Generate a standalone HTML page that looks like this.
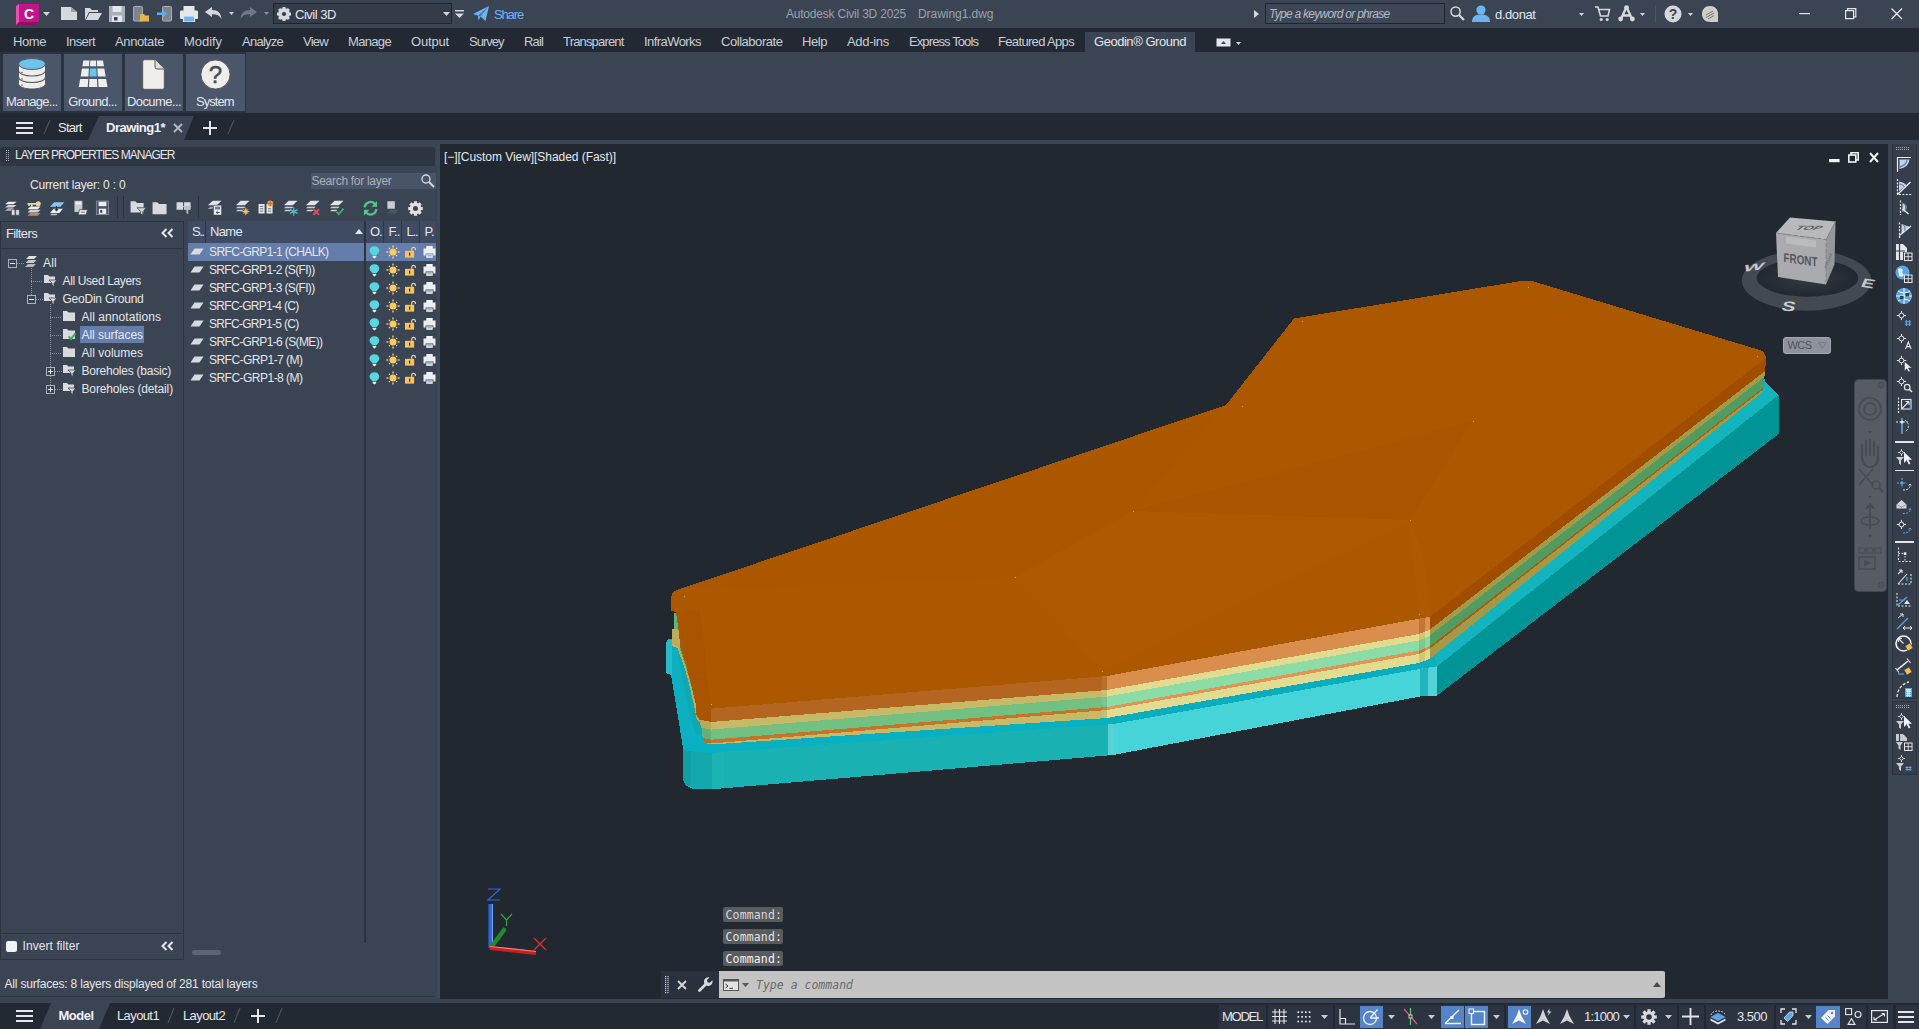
<!DOCTYPE html>
<html lang="en"><head><meta charset="utf-8"><title>Autodesk Civil 3D 2025 - Drawing1.dwg</title>
<style>
html,body{margin:0;padding:0;background:#3b4453;}
body{width:1919px;height:1029px;position:relative;overflow:hidden;font-family:"Liberation Sans",sans-serif;}
body>div,body>span,body>svg{position:absolute;display:block;}
span{white-space:pre;}
</style></head>
<body>
<div style="left:0px;top:0px;width:1919px;height:28px;background:#3b4453;"></div>
<div style="left:0px;top:28px;width:1919px;height:24px;background:#222933;"></div>
<div style="left:0px;top:52px;width:1919px;height:61px;background:#3b4453;"></div>
<div style="left:0px;top:113px;width:1919px;height:27px;background:#222933;"></div>
<div style="left:0px;top:140px;width:1919px;height:863px;background:#3b4453;"></div>
<div style="left:0px;top:1003px;width:1919px;height:26px;background:#222933;"></div>
<div style="left:440px;top:144px;width:1448px;height:855px;background:#212830;"></div>
<svg style="left:14px;top:3px;" width="27" height="23" viewBox="0 0 27 23"><path d="M2 3 L5 1 L25 1 L25 19 L22 22 L2 22 Z" fill="#8e0f63"/><path d="M5 1 H25 V19 H5 Z" fill="#c4148c"/><path d="M2 3 L5 1 V19 L2 22 Z" fill="#e255b0"/><text x="15" y="15.5" font-family="Liberation Sans,sans-serif" font-weight="700" font-size="14" fill="#fff" text-anchor="middle">C</text></svg>
<svg style="left:42.5px;top:12.0px;" width="7" height="4" viewBox="0 0 7 4"><path d="M0 0 H7 L3.5 4 Z" fill="#d4d6d9"/></svg>
<svg style="left:61px;top:7px;" width="17" height="14" viewBox="0 0 17 14"><path d="M0 0 H10 L16 5 V13 H0 Z" fill="#d6d8db"/><path d="M10 0 V5 H16 Z" fill="#9aa0a8"/></svg>
<svg style="left:85px;top:7px;" width="18" height="14" viewBox="0 0 18 14"><path d="M0 1 H5 L7 3 H13 V5 H4 L0 13 Z" fill="#d6d8db"/><path d="M4.5 6 H17 L13 13 H0.8 Z" fill="#d6d8db"/></svg>
<svg style="left:109px;top:6px;" width="17" height="16" viewBox="0 0 17 16"><path d="M0 0 H16 V16 H0 Z" fill="#a9afb8"/><rect x="3.5" y="0" width="9" height="6" fill="#e6e7ea"/><rect x="3" y="9.5" width="10" height="6.5" fill="#e6e7ea"/><rect x="5" y="11" width="3.5" height="3.5" fill="#3b4453"/></svg>
<svg style="left:133px;top:6px;" width="17" height="16" viewBox="0 0 17 16"><rect x="0.5" y="0.5" width="9" height="14.5" rx="1" fill="#7d848e" stroke="#a9afb8"/><path d="M7 8 H11 L12 9.5 H16 V15.5 H7 Z" fill="#e8b54a"/></svg>
<svg style="left:157px;top:6px;" width="16" height="16" viewBox="0 0 16 16"><rect x="5.5" y="0.5" width="9" height="14.5" rx="1" fill="#7d848e" stroke="#a9afb8"/><path d="M0 6.5 H6 V4 L10 7.7 L6 11.4 V9 H0 Z" fill="#58b0f0"/></svg>
<svg style="left:180px;top:6px;" width="18" height="16" viewBox="0 0 18 16"><rect x="3.5" y="0" width="11" height="5" fill="#e6e7ea"/><rect x="0" y="4.5" width="18" height="8.5" rx="1" fill="#e6e7ea"/><rect x="3.5" y="10" width="11" height="6" fill="#6db5f2" stroke="#e6e7ea" stroke-width="1.2"/></svg>
<svg style="left:205px;top:7px;" width="17" height="13" viewBox="0 0 17 13"><path d="M0 5 L7 0 V3 C13 3 16 6 16.5 12 C14.5 8.5 12 7.2 7 7.2 V10 Z" fill="#d6d8db"/></svg>
<svg style="left:228.5px;top:12.0px;" width="5" height="3" viewBox="0 0 5 3"><path d="M0 0 H5 L2.5 3 Z" fill="#d4d6d9"/></svg>
<svg style="left:240px;top:7px;" width="17" height="13" viewBox="0 0 17 13"><path d="M17 5 L10 0 V3 C4 3 1 6 0.5 12 C2.5 8.5 5 7.2 10 7.2 V10 Z" fill="#6f7886"/></svg>
<svg style="left:263.5px;top:12.0px;" width="5" height="3" viewBox="0 0 5 3"><path d="M0 0 H5 L2.5 3 Z" fill="#8d95a1"/></svg>
<div style="left:273px;top:3px;width:179px;height:21px;background:#343c4a;border:1px solid #1f252e;box-sizing:border-box;"></div>
<svg style="left:277px;top:7px;" width="14" height="14" viewBox="0 0 14 14"><g transform="translate(7 7)"><circle r="4" fill="none" stroke="#d6d8db" stroke-width="3.8"/><g fill="#d6d8db"><rect x="-1.5" y="-7" width="3" height="3.2" transform="rotate(0)"/><rect x="-1.5" y="-7" width="3" height="3.2" transform="rotate(45)"/><rect x="-1.5" y="-7" width="3" height="3.2" transform="rotate(90)"/><rect x="-1.5" y="-7" width="3" height="3.2" transform="rotate(135)"/><rect x="-1.5" y="-7" width="3" height="3.2" transform="rotate(180)"/><rect x="-1.5" y="-7" width="3" height="3.2" transform="rotate(225)"/><rect x="-1.5" y="-7" width="3" height="3.2" transform="rotate(270)"/><rect x="-1.5" y="-7" width="3" height="3.2" transform="rotate(315)"/></g></g></svg>
<span id="t1" style="left:295px;top:5.5px;font:normal 400 13px/17px 'Liberation Sans',sans-serif;color:#e4e6ea;letter-spacing:-0.475px;">Civil 3D</span>
<svg style="left:442.5px;top:12.0px;" width="7" height="4" viewBox="0 0 7 4"><path d="M0 0 H7 L3.5 4 Z" fill="#d4d6d9"/></svg>
<svg style="left:455px;top:10px;" width="10" height="9" viewBox="0 0 10 9"><rect x="0" y="0" width="9" height="1.5" fill="#d6d8db"/><path d="M0 3.5 H9 L4.5 8 Z" fill="#d6d8db"/></svg>
<svg style="left:473px;top:6px;" width="17" height="16" viewBox="0 0 17 16"><path d="M0 8 L16 0 L12.5 15 L7.5 10.5 L5.5 14.5 L5 9.5 Z" fill="#6db5f2"/><path d="M5 9.5 L16 0 L7.5 10.5 Z" fill="#3b4453" opacity=".55"/></svg>
<span id="t2" style="left:494px;top:5.5px;font:normal 400 13px/17px 'Liberation Sans',sans-serif;color:#6db5f2;letter-spacing:-1.141px;">Share</span>
<span id="t3" style="left:786px;top:6.0px;font:normal 400 12px/16px 'Liberation Sans',sans-serif;color:#9aa2ae;letter-spacing:-0.215px;">Autodesk Civil 3D 2025</span>
<span id="t4" style="left:918px;top:6.0px;font:normal 400 12px/16px 'Liberation Sans',sans-serif;color:#9aa2ae;letter-spacing:-0.046px;">Drawing1.dwg</span>
<svg style="left:1254px;top:10px;" width="5" height="8" viewBox="0 0 5 8"><path d="M0 0 L5 4 L0 8 Z" fill="#d6d8db"/></svg>
<div style="left:1265px;top:3px;width:180px;height:21px;background:#3f4757;border:1px solid #1f252e;box-sizing:border-box;"></div>
<span id="t5" style="left:1269px;top:6.0px;font:italic 400 12px/16px 'Liberation Sans',sans-serif;color:#b4bac4;letter-spacing:-0.723px;">Type a keyword or phrase</span>
<svg style="left:1450px;top:6px;" width="15" height="15" viewBox="0 0 15 15"><circle cx="5.6" cy="5.6" r="4.6" fill="none" stroke="#d6d8db" stroke-width="1.5"/><path d="M9 9 L14 14" stroke="#d6d8db" stroke-width="2.2"/></svg>
<svg style="left:1472px;top:5px;" width="18" height="17" viewBox="0 0 18 17"><circle cx="9" cy="5" r="4.6" fill="#6db5f2"/><path d="M0 17 C0 11 4 9.5 9 9.5 C14 9.5 18 11 18 17 Z" fill="#6db5f2"/></svg>
<span id="t6" style="left:1495px;top:5.5px;font:normal 400 13px/17px 'Liberation Sans',sans-serif;color:#e4e6ea;letter-spacing:-0.411px;">d.donat</span>
<svg style="left:1579.0px;top:13.0px;" width="5" height="3" viewBox="0 0 5 3"><path d="M0 0 H5 L2.5 3 Z" fill="#d4d6d9"/></svg>
<svg style="left:1595px;top:6px;" width="16" height="16" viewBox="0 0 16 16"><path d="M0 1 H3 L5.5 10 H13 L14.5 3.5 H4" fill="none" stroke="#d6d8db" stroke-width="1.6"/><circle cx="6.2" cy="13.5" r="1.5" fill="#d6d8db"/><circle cx="12.2" cy="13.5" r="1.5" fill="#d6d8db"/></svg>
<svg style="left:1618px;top:5px;" width="17" height="17" viewBox="0 0 17 17"><path d="M8.5 2 L2.5 15 M8.5 2 L14.5 15 M4.5 10.5 H12.5" stroke="#d6d8db" stroke-width="2.4" fill="none"/><circle cx="8.5" cy="2.6" r="2.4" fill="#d6d8db"/><circle cx="2.6" cy="14" r="2.4" fill="#d6d8db"/><circle cx="14.4" cy="14" r="2.4" fill="#d6d8db"/></svg>
<svg style="left:1640.0px;top:13.0px;" width="5" height="3" viewBox="0 0 5 3"><path d="M0 0 H5 L2.5 3 Z" fill="#d4d6d9"/></svg>
<div style="left:1655px;top:5px;width:1px;height:18px;background:#4a5465;"></div>
<svg style="left:1664px;top:5px;" width="18" height="18" viewBox="0 0 18 18"><circle cx="9" cy="9" r="8.5" fill="#d6d8db"/><text x="9" y="14" text-anchor="middle" font-family="Liberation Sans,sans-serif" font-weight="700" font-size="14" fill="#3b4453">?</text></svg>
<svg style="left:1687.5px;top:13.0px;" width="5" height="3" viewBox="0 0 5 3"><path d="M0 0 H5 L2.5 3 Z" fill="#d4d6d9"/></svg>
<svg style="left:1701px;top:5px;" width="18" height="18" viewBox="0 0 18 18"><path d="M9 1 C14 1 17 4.5 17 9 V17 H9 C4 17 1 13.5 1 9 C1 4.5 4 1 9 1 Z" fill="#d0cec8"/><path d="M5 10 L12 6 M5 12.5 L13 8 M7 14 L13 10.5" stroke="#77756f" stroke-width="1"/></svg>
<svg style="left:1799px;top:13px;" width="12" height="2" viewBox="0 0 12 2"><rect width="11" height="1.2" fill="#e4e6ea"/></svg>
<svg style="left:1845px;top:8px;" width="12" height="12" viewBox="0 0 12 12"><rect x="0.6" y="2.6" width="8" height="8" fill="none" stroke="#e4e6ea" stroke-width="1.2"/><path d="M2.6 2.6 V0.6 H10.8 V8.8 H8.6" fill="none" stroke="#e4e6ea" stroke-width="1.2"/></svg>
<svg style="left:1891px;top:8px;" width="12" height="12" viewBox="0 0 12 12"><path d="M0.5 0.5 L11 11 M11 0.5 L0.5 11" stroke="#e4e6ea" stroke-width="1.3"/></svg>
<div style="left:1085px;top:32px;width:110px;height:20px;background:#3b4453;"></div>
<span id="t7" style="left:13px;top:33.0px;font:normal 400 13px/17px 'Liberation Sans',sans-serif;color:#c9ced6;letter-spacing:-0.422px;">Home</span>
<span id="t8" style="left:66px;top:33.0px;font:normal 400 13px/17px 'Liberation Sans',sans-serif;color:#c9ced6;letter-spacing:-0.586px;">Insert</span>
<span id="t9" style="left:115px;top:33.0px;font:normal 400 13px/17px 'Liberation Sans',sans-serif;color:#c9ced6;letter-spacing:-0.381px;">Annotate</span>
<span id="t10" style="left:184px;top:33.0px;font:normal 400 13px/17px 'Liberation Sans',sans-serif;color:#c9ced6;letter-spacing:-0.049px;">Modify</span>
<span id="t11" style="left:242px;top:33.0px;font:normal 400 13px/17px 'Liberation Sans',sans-serif;color:#c9ced6;letter-spacing:-0.750px;">Analyze</span>
<span id="t12" style="left:303px;top:33.0px;font:normal 400 13px/17px 'Liberation Sans',sans-serif;color:#c9ced6;letter-spacing:-0.738px;">View</span>
<span id="t13" style="left:348px;top:33.0px;font:normal 400 13px/17px 'Liberation Sans',sans-serif;color:#c9ced6;letter-spacing:-0.664px;">Manage</span>
<span id="t14" style="left:411px;top:33.0px;font:normal 400 13px/17px 'Liberation Sans',sans-serif;color:#c9ced6;letter-spacing:-0.172px;">Output</span>
<span id="t15" style="left:469px;top:33.0px;font:normal 400 13px/17px 'Liberation Sans',sans-serif;color:#c9ced6;letter-spacing:-0.995px;">Survey</span>
<span id="t16" style="left:524px;top:33.0px;font:normal 400 13px/17px 'Liberation Sans',sans-serif;color:#c9ced6;letter-spacing:-0.852px;">Rail</span>
<span id="t17" style="left:563px;top:33.0px;font:normal 400 13px/17px 'Liberation Sans',sans-serif;color:#c9ced6;letter-spacing:-0.828px;">Transparent</span>
<span id="t18" style="left:644px;top:33.0px;font:normal 400 13px/17px 'Liberation Sans',sans-serif;color:#c9ced6;letter-spacing:-0.561px;">InfraWorks</span>
<span id="t19" style="left:721px;top:33.0px;font:normal 400 13px/17px 'Liberation Sans',sans-serif;color:#c9ced6;letter-spacing:-0.455px;">Collaborate</span>
<span id="t20" style="left:802px;top:33.0px;font:normal 400 13px/17px 'Liberation Sans',sans-serif;color:#c9ced6;letter-spacing:-0.438px;">Help</span>
<span id="t21" style="left:847px;top:33.0px;font:normal 400 13px/17px 'Liberation Sans',sans-serif;color:#c9ced6;letter-spacing:-0.297px;">Add-ins</span>
<span id="t22" style="left:909px;top:33.0px;font:normal 400 13px/17px 'Liberation Sans',sans-serif;color:#c9ced6;letter-spacing:-0.899px;">Express Tools</span>
<span id="t23" style="left:998px;top:33.0px;font:normal 400 13px/17px 'Liberation Sans',sans-serif;color:#c9ced6;letter-spacing:-0.659px;">Featured Apps</span>
<span id="t24" style="left:1094px;top:33.0px;font:normal 400 13px/17px 'Liberation Sans',sans-serif;color:#e4e6ea;letter-spacing:-0.463px;">Geodin&#174; Ground</span>
<svg style="left:1216px;top:38px;" width="18" height="9" viewBox="0 0 18 9"><rect x="0.5" y="0.5" width="14" height="8" fill="#e4e6ea"/><path d="M5 6 H10 L7.5 3 Z" fill="#3b4453"/></svg>
<svg style="left:1235.5px;top:41.5px;" width="5" height="3" viewBox="0 0 5 3"><path d="M0 0 H5 L2.5 3 Z" fill="#d4d6d9"/></svg>
<div style="left:0px;top:52px;width:246px;height:61px;background:#2b3340;"></div>
<div style="left:2.6px;top:54px;width:58.5px;height:57px;background:#4b566b;"></div>
<span id="t25" style="left:6px;top:93.0px;font:normal 400 13px/17px 'Liberation Sans',sans-serif;color:#e4e6ea;letter-spacing:-0.703px;">Manage...</span>
<div style="left:63.8px;top:54px;width:58.5px;height:57px;background:#4b566b;"></div>
<span id="t26" style="left:68.3px;top:93.0px;font:normal 400 13px/17px 'Liberation Sans',sans-serif;color:#e4e6ea;letter-spacing:-0.634px;">Ground...</span>
<div style="left:124.9px;top:54px;width:58.5px;height:57px;background:#4b566b;"></div>
<span id="t27" style="left:127px;top:93.0px;font:normal 400 13px/17px 'Liberation Sans',sans-serif;color:#e4e6ea;letter-spacing:-0.583px;">Docume...</span>
<div style="left:186px;top:54px;width:58.5px;height:57px;background:#4b566b;"></div>
<span id="t28" style="left:196px;top:93.0px;font:normal 400 13px/17px 'Liberation Sans',sans-serif;color:#e4e6ea;letter-spacing:-0.974px;">System</span>
<svg style="left:18px;top:58px;" width="28" height="32" viewBox="0 0 28 32"><path d="M0.5 6 V25.5 C0.5 28.8 6.5 31 14 31 C21.5 31 27.5 28.8 27.5 25.5 V6 Z" fill="#f0eeea" stroke="#55595f" stroke-width="1"/><path d="M0.5 12.5 C0.5 15.8 6.5 18 14 18 C21.5 18 27.5 15.8 27.5 12.5 M0.5 19 C0.5 22.3 6.5 24.5 14 24.5 C21.5 24.5 27.5 22.3 27.5 19" fill="none" stroke="#55595f" stroke-width="1.2"/><ellipse cx="14" cy="6" rx="13.5" ry="5.5" fill="#6cc4ec" stroke="#55595f" stroke-width="1"/><circle cx="4" cy="14.5" r=".8" fill="#55595f"/><circle cx="4" cy="21" r=".8" fill="#55595f"/><circle cx="4" cy="27" r=".8" fill="#55595f"/></svg>
<svg style="left:77px;top:60px;" width="32" height="28" viewBox="0 0 32 28"><polygon points="6.33,0.4 12.45,0.4 12.07,6.2 5.34,6.2" fill="#f0eeea"/><polygon points="13.31,0.4 18.99,0.4 19.28,6.2 13.02,6.2" fill="#f0eeea"/><polygon points="19.85,0.4 25.97,0.4 26.96,6.2 20.23,6.2" fill="#f0eeea"/><polygon points="4.97,8.4 11.93,8.4 11.42,16.4 3.61,16.4" fill="#f0eeea"/><polygon points="12.91,8.4 19.39,8.4 19.78,16.4 12.52,16.4" fill="#6cc4ec"/><polygon points="20.37,8.4 27.33,8.4 28.69,16.4 20.88,16.4" fill="#f0eeea"/><polygon points="3.16,19 11.25,19 10.74,27 1.80,27" fill="#f0eeea"/><polygon points="12.39,19 19.91,19 20.30,27 12.00,27" fill="#f0eeea"/><polygon points="21.05,19 29.14,19 30.50,27 21.56,27" fill="#f0eeea"/></svg>
<svg style="left:142px;top:58.5px;" width="24" height="31" viewBox="0 0 24 31"><path d="M2.5 0.7 H13 L22.3 10 V28.5 Q22.3 30.3 20.5 30.3 H2.5 Q0.7 30.3 0.7 28.5 V2.5 Q0.7 0.7 2.5 0.7 Z" fill="#f0eeea" stroke="#55595f" stroke-width="1"/><path d="M13 0.7 V8 Q13 10 15 10 H22.3" fill="#e2e0dc" stroke="#55595f" stroke-width="1"/></svg>
<svg style="left:199.5px;top:58.5px;" width="31" height="31" viewBox="0 0 31 31"><circle cx="15.5" cy="15.5" r="14.6" fill="#f0eeea" stroke="#55595f" stroke-width="1"/><text x="15.5" y="24" text-anchor="middle" font-family="Liberation Sans,sans-serif" font-weight="400" font-size="24" fill="#4a4d52" stroke="#4a4d52" stroke-width=".5">?</text></svg>
<svg style="left:16px;top:122px;" width="17" height="12" viewBox="0 0 17 12"><path d="M0 1 H17 M0 6 H17 M0 11 H17" stroke="#e4e6ea" stroke-width="1.8"/></svg>
<svg style="left:42px;top:120px;" width="10" height="14" viewBox="0 0 10 14"><path d="M8 0 L2 14" stroke="#4a5261" stroke-width="1.2"/></svg>
<span id="t29" style="left:58px;top:119.0px;font:normal 400 13px/17px 'Liberation Sans',sans-serif;color:#e4e6ea;letter-spacing:-0.794px;">Start</span>
<svg style="left:88px;top:116px;" width="108" height="24" viewBox="0 0 108 24"><path d="M0 24 L11 0 H106 L96 24 Z" fill="#3b4453"/></svg>
<span id="t30" style="left:106px;top:119.0px;font:normal 700 13px/17px 'Liberation Sans',sans-serif;color:#f0f1f3;letter-spacing:-0.509px;">Drawing1*</span>
<svg style="left:173px;top:123px;" width="10" height="10" viewBox="0 0 10 10"><path d="M1 1 L9 9 M9 1 L1 9" stroke="#b4bac4" stroke-width="1.8"/></svg>
<svg style="left:203px;top:121px;" width="14" height="14" viewBox="0 0 14 14"><path d="M7 0 V14 M0 7 H14" stroke="#e4e6ea" stroke-width="2"/></svg>
<svg style="left:226px;top:120px;" width="10" height="14" viewBox="0 0 10 14"><path d="M8 0 L2 14" stroke="#4a5261" stroke-width="1.2"/></svg>
<div style="left:0px;top:146px;width:437px;height:852px;background:#3b4453;border-radius:0 0 4px 4px;"></div>
<div style="left:436.5px;top:146px;width:3.5px;height:852px;background:#3f4858;"></div>
<div style="left:0px;top:996px;width:434px;height:1px;background:#2f3745;"></div>
<div style="left:0px;top:146.5px;width:435px;height:19.5px;background:#2e3543;border-radius:3px 3px 0 0;"></div>
<svg style="left:6px;top:150px;" width="4" height="12" viewBox="0 0 4 12"><rect x="0" y="0" width="1" height="1" fill="#aab0ba"/><rect x="0" y="2" width="1" height="1" fill="#aab0ba"/><rect x="0" y="4" width="1" height="1" fill="#aab0ba"/><rect x="0" y="6" width="1" height="1" fill="#aab0ba"/><rect x="0" y="8" width="1" height="1" fill="#aab0ba"/><rect x="0" y="10" width="1" height="1" fill="#aab0ba"/><rect x="2" y="0" width="1" height="1" fill="#aab0ba"/><rect x="2" y="2" width="1" height="1" fill="#aab0ba"/><rect x="2" y="4" width="1" height="1" fill="#aab0ba"/><rect x="2" y="6" width="1" height="1" fill="#aab0ba"/><rect x="2" y="8" width="1" height="1" fill="#aab0ba"/><rect x="2" y="10" width="1" height="1" fill="#aab0ba"/></svg>
<span id="t31" style="left:15px;top:147.0px;font:normal 400 12px/16px 'Liberation Sans',sans-serif;color:#e4e6ea;letter-spacing:-0.977px;">LAYER PROPERTIES MANAGER</span>
<span id="t32" style="left:30px;top:177.0px;font:normal 400 12px/16px 'Liberation Sans',sans-serif;color:#e4e6ea;letter-spacing:-0.194px;">Current layer: 0 : 0</span>
<div style="left:311px;top:173px;width:125px;height:16px;background:#4a5468;"></div>
<span id="t33" style="left:311.5px;top:173.0px;font:normal 400 12px/16px 'Liberation Sans',sans-serif;color:#aab1bd;letter-spacing:-0.294px;">Search for layer</span>
<svg style="left:421px;top:174px;" width="14" height="14" viewBox="0 0 14 14"><circle cx="5" cy="5" r="4" fill="none" stroke="#d6d8db" stroke-width="1.4"/><path d="M8 8 L13 13" stroke="#d6d8db" stroke-width="2"/></svg>
<svg style="left:3px;top:199px;" width="17" height="17" viewBox="-0.6 -1.4 18.2 18.2"><path d="M5 1.5 H14 L10.5 4.2 H1.5 Z" fill="#eceef0"/><path d="M5 5 H14 L10.5 7.7 H1.5 Z" fill="#d0d3d7"/><path d="M5 8.5 H11 L10 11.2 H1.5 Z" fill="#b4b8be"/><path d="M8.5 10 H12.2 V16 H8.5 Z M13 10 H16.8 V16 H13 Z" fill="#dcdfe3" stroke="#3b4453" stroke-width=".6"/></svg>
<svg style="left:26px;top:199px;" width="17" height="17" viewBox="-0.6 -1.4 18.2 18.2"><path d="M4 6.5 H15 L12 9.5 H1 Z" fill="#eceef0"/><path d="M4 10 H15 L12 13 H1 Z" fill="#cfd2d6"/><path d="M4 13.5 H15 L12 16.5 H1 Z" fill="#c48a52"/><circle cx="12.5" cy="3.8" r="2.7" fill="#e8d79c"/><path d="M1 3 H10.5 V4.8 H6.5 V6.6 H4.6 V4.8 H3.4 V6 H1.8 V4.8 H1 Z" fill="#e8d79c"/></svg>
<svg style="left:48px;top:199px;" width="17" height="17" viewBox="-0.6 -1.4 18.2 18.2"><path d="M6 2 H17 L12.5 7 H1.5 Z" fill="#8ac4ee"/><path d="M5.5 9 H15.5 L11.5 13.5 H1.5 Z" fill="#eceef0"/><path d="M8.5 6 V11 M6.8 9.4 L8.5 11.2 L10.2 9.4" stroke="#2a303a" stroke-width="1.1" fill="none"/><path d="M3 14.5 H9.5 L8.5 16 H2 Z" fill="#c8ccd1"/></svg>
<svg style="left:72px;top:199px;" width="17" height="17" viewBox="-0.6 -1.4 18.2 18.2"><rect x="2" y="0.5" width="8.5" height="12" fill="#c9ccd2"/><rect x="3.3" y="1.8" width="6" height="2.6" fill="#eceef0"/><path d="M7.5 10 H16 L14.5 15.5 H6 Z" fill="#eceef0" stroke="#3b4453" stroke-width=".8"/><path d="M9 12.7 H13.5" stroke="#5a6270" stroke-width="1"/></svg>
<svg style="left:94px;top:199px;" width="17" height="17" viewBox="-0.6 -1.4 18.2 18.2"><rect x="2" y="0.8" width="13" height="14.4" fill="#4c5566" stroke="#828a98" stroke-width="1"/><rect x="4.3" y="1.6" width="8.4" height="4.6" fill="#eceef0"/><rect x="4.6" y="9" width="7.8" height="5.6" fill="#eceef0"/><rect x="6" y="10.5" width="2.2" height="2.8" fill="#2f3644"/></svg>
<div style="left:117px;top:196px;width:1px;height:22px;background:#2c3340;"></div>
<div style="left:123px;top:196px;width:1px;height:22px;background:#2c3340;"></div>
<svg style="left:130px;top:199px;" width="17" height="17" viewBox="-0.6 -1.4 18.2 18.2"><path d="M0 1 H5 L7 3 H14 V13 H0 Z" fill="#d8dadd"/><path d="M7 8 H17 L13.2 12 V16 L10.8 14.5 V12 Z" fill="#d8dadd" stroke="#3b4453" stroke-width=".9"/></svg>
<svg style="left:152px;top:199px;" width="17" height="17" viewBox="-0.6 -1.4 18.2 18.2"><path d="M0 2 H5 L7 4 H15 V15 H0 Z" fill="#d8dadd"/></svg>
<svg style="left:176px;top:199px;" width="17" height="17" viewBox="-0.6 -1.4 18.2 18.2"><path d="M0 2 H7 V10 H0 Z M8 2 H15 V10 H8 Z" fill="#d8dadd"/><path d="M6 6 H16 L12.5 10 V15 L10.5 13.5 V10 Z" fill="#b9bdc4"/></svg>
<div style="left:198px;top:196px;width:1px;height:22px;background:#2c3340;"></div>
<svg style="left:206px;top:199px;" width="17" height="17" viewBox="-0.6 -1.4 18.2 18.2"><path d="M6.5 0.5 H16 L11 5.2 H1.5 Z" fill="#e2e3e6"/><path d="M4 6.8 H8 L6 9.2 H1.2 Z" fill="#9aa0aa"/><rect x="7.5" y="5.2" width="8.6" height="10.6" rx="1" fill="#f0f1f3" stroke="#3b4453" stroke-width=".6"/><rect x="9" y="6.8" width="5.6" height="3" fill="#4f7fc4"/><path d="M14 13 H10.4 M11.8 11.6 L10.4 13 L11.8 14.4" stroke="#333" stroke-width="1" fill="none"/></svg>
<svg style="left:234px;top:199px;" width="17" height="17" viewBox="-0.6 -1.4 18.2 18.2"><path d="M6.5 0.5 H16 L11 5.2 H1.5 Z" fill="#e2e3e6"/><path d="M3.2 7 H11.8 L10.2 8.6 H1.6 Z" fill="#d0d2d6"/><path d="M3.2 10.2 H9.5 L8 11.8 H1.6 Z" fill="#d0d2d6"/><path d="M12 7.5 L13.2 10.8 L16.5 12 L13.2 13.2 L12 16.5 L10.8 13.2 L7.5 12 L10.8 10.8 Z" fill="#f2c14a"/><path d="M9.3 9.3 L14.7 14.7 M14.7 9.3 L9.3 14.7" stroke="#f2c14a" stroke-width=".9"/></svg>
<svg style="left:258px;top:199px;" width="17" height="17" viewBox="-0.6 -1.4 18.2 18.2"><path d="M0 4 H6.5 V14 H0 Z M8.5 4 H15 V14 H8.5 Z" fill="#e6e7ea"/><path d="M1.5 6.5 H5 M1.5 9 H5 M1.5 11.5 H5 M10 9 H13.5 M10 11.5 H13.5" stroke="#5a6474" stroke-width=".9"/><circle cx="12.5" cy="3.5" r="3.2" fill="#f0a040"/><path d="M12.5 1 V6 M10 3.5 H15" stroke="#e8503a" stroke-width="1"/></svg>
<svg style="left:282px;top:199px;" width="17" height="17" viewBox="-0.6 -1.4 18.2 18.2"><path d="M6.5 0.5 H16 L11 5.2 H1.5 Z" fill="#e2e3e6"/><path d="M3.2 7 H11.8 L10.2 8.6 H1.6 Z" fill="#d0d2d6"/><path d="M3.2 10.2 H9.5 L8 11.8 H1.6 Z" fill="#d0d2d6"/><path d="M12 7.5 V16.5 M8 10 L16 14 M16 10 L8 14" stroke="#4fc4cc" stroke-width="1.3"/></svg>
<svg style="left:304px;top:199px;" width="17" height="17" viewBox="-0.6 -1.4 18.2 18.2"><path d="M6.5 0.5 H16 L11 5.2 H1.5 Z" fill="#e2e3e6"/><path d="M3.2 7 H11.8 L10.2 8.6 H1.6 Z" fill="#d0d2d6"/><path d="M3.2 10.2 H9.5 L8 11.8 H1.6 Z" fill="#d0d2d6"/><path d="M9.5 9.5 L15.5 15.5 M15.5 9.5 L9.5 15.5" stroke="#e8505a" stroke-width="2"/></svg>
<svg style="left:328px;top:199px;" width="17" height="17" viewBox="-0.6 -1.4 18.2 18.2"><path d="M6.5 0.5 H16 L11 5.2 H1.5 Z" fill="#e2e3e6"/><path d="M3.2 7 H11.8 L10.2 8.6 H1.6 Z" fill="#d0d2d6"/><path d="M3.2 10.2 H9.5 L8 11.8 H1.6 Z" fill="#d0d2d6"/><path d="M8.5 12 L11 14.8 L16 9" stroke="#3fae6a" stroke-width="2" fill="none"/></svg>
<svg style="left:362px;top:199px;" width="17" height="17" viewBox="-0.6 -1.4 18.2 18.2"><path d="M2.2 7.5 A6.3 6.3 0 0 1 13.2 4" fill="none" stroke="#52c888" stroke-width="2.4"/><path d="M15.5 0.8 V6.8 H9.5 Z" fill="#52c888"/><path d="M14.8 9.5 A6.3 6.3 0 0 1 3.8 13" fill="none" stroke="#52c888" stroke-width="2.4"/><path d="M1.5 16.2 V10.2 H7.5 Z" fill="#52c888"/></svg>
<svg style="left:384px;top:199px;" width="17" height="17" viewBox="-0.6 -1.4 18.2 18.2"><rect x="3" y="1" width="8" height="8" fill="#c9ccd1"/><path d="M6 10.5 H15 L12 14 H3 Z" fill="#4c5564"/></svg>
<svg style="left:407px;top:199px;" width="17" height="17" viewBox="-0.6 -1.4 18.2 18.2"><g transform="translate(8.5 8.8)"><circle r="4.4" fill="none" stroke="#e0e1e4" stroke-width="3.4"/><g fill="#e0e1e4"><rect x="-1.7" y="-7.8" width="3.4" height="3.2" transform="rotate(0)"/><rect x="-1.7" y="-7.8" width="3.4" height="3.2" transform="rotate(45)"/><rect x="-1.7" y="-7.8" width="3.4" height="3.2" transform="rotate(90)"/><rect x="-1.7" y="-7.8" width="3.4" height="3.2" transform="rotate(135)"/><rect x="-1.7" y="-7.8" width="3.4" height="3.2" transform="rotate(180)"/><rect x="-1.7" y="-7.8" width="3.4" height="3.2" transform="rotate(225)"/><rect x="-1.7" y="-7.8" width="3.4" height="3.2" transform="rotate(270)"/><rect x="-1.7" y="-7.8" width="3.4" height="3.2" transform="rotate(315)"/></g></g></svg>
<div style="left:0px;top:221px;width:184px;height:739px;background:#3b4453;border:1px solid #2c3340;box-sizing:border-box;"></div>
<div style="left:0px;top:248px;width:184px;height:1px;background:#2c3340;"></div>
<div style="left:0px;top:933px;width:184px;height:1px;background:#2c3340;"></div>
<span id="t34" style="left:6px;top:224.5px;font:normal 400 13px/17px 'Liberation Sans',sans-serif;color:#e4e6ea;letter-spacing:-0.627px;">Filters</span>
<svg style="left:161px;top:228px;" width="13" height="10" viewBox="0 0 13 10"><path d="M5.5 1 L1.5 5 L5.5 9 M11.5 1 L7.5 5 L11.5 9" fill="none" stroke="#e4e6ea" stroke-width="2"/></svg>
<svg style="left:161px;top:941px;" width="13" height="10" viewBox="0 0 13 10"><path d="M5.5 1 L1.5 5 L5.5 9 M11.5 1 L7.5 5 L11.5 9" fill="none" stroke="#e4e6ea" stroke-width="2"/></svg>
<div style="left:6px;top:940.5px;width:11px;height:11px;background:#f2f3f5;border-radius:2px;"></div>
<span id="t35" style="left:22.5px;top:938.0px;font:normal 400 12px/16px 'Liberation Sans',sans-serif;color:#e4e6ea;letter-spacing:0.076px;">Invert filter</span>
<svg style="left:31px;top:268px;" width="1" height="31" viewBox="0 0 1 31"><rect x="0" y="0" width="1" height="1" fill="#8b93a0"/><rect x="0" y="2" width="1" height="1" fill="#8b93a0"/><rect x="0" y="4" width="1" height="1" fill="#8b93a0"/><rect x="0" y="6" width="1" height="1" fill="#8b93a0"/><rect x="0" y="8" width="1" height="1" fill="#8b93a0"/><rect x="0" y="10" width="1" height="1" fill="#8b93a0"/><rect x="0" y="12" width="1" height="1" fill="#8b93a0"/><rect x="0" y="14" width="1" height="1" fill="#8b93a0"/><rect x="0" y="16" width="1" height="1" fill="#8b93a0"/><rect x="0" y="18" width="1" height="1" fill="#8b93a0"/><rect x="0" y="20" width="1" height="1" fill="#8b93a0"/><rect x="0" y="22" width="1" height="1" fill="#8b93a0"/><rect x="0" y="24" width="1" height="1" fill="#8b93a0"/><rect x="0" y="26" width="1" height="1" fill="#8b93a0"/><rect x="0" y="28" width="1" height="1" fill="#8b93a0"/><rect x="0" y="30" width="1" height="1" fill="#8b93a0"/></svg>
<svg style="left:50px;top:304px;" width="1" height="86" viewBox="0 0 1 86"><rect x="0" y="0" width="1" height="1" fill="#8b93a0"/><rect x="0" y="2" width="1" height="1" fill="#8b93a0"/><rect x="0" y="4" width="1" height="1" fill="#8b93a0"/><rect x="0" y="6" width="1" height="1" fill="#8b93a0"/><rect x="0" y="8" width="1" height="1" fill="#8b93a0"/><rect x="0" y="10" width="1" height="1" fill="#8b93a0"/><rect x="0" y="12" width="1" height="1" fill="#8b93a0"/><rect x="0" y="14" width="1" height="1" fill="#8b93a0"/><rect x="0" y="16" width="1" height="1" fill="#8b93a0"/><rect x="0" y="18" width="1" height="1" fill="#8b93a0"/><rect x="0" y="20" width="1" height="1" fill="#8b93a0"/><rect x="0" y="22" width="1" height="1" fill="#8b93a0"/><rect x="0" y="24" width="1" height="1" fill="#8b93a0"/><rect x="0" y="26" width="1" height="1" fill="#8b93a0"/><rect x="0" y="28" width="1" height="1" fill="#8b93a0"/><rect x="0" y="30" width="1" height="1" fill="#8b93a0"/><rect x="0" y="32" width="1" height="1" fill="#8b93a0"/><rect x="0" y="34" width="1" height="1" fill="#8b93a0"/><rect x="0" y="36" width="1" height="1" fill="#8b93a0"/><rect x="0" y="38" width="1" height="1" fill="#8b93a0"/><rect x="0" y="40" width="1" height="1" fill="#8b93a0"/><rect x="0" y="42" width="1" height="1" fill="#8b93a0"/><rect x="0" y="44" width="1" height="1" fill="#8b93a0"/><rect x="0" y="46" width="1" height="1" fill="#8b93a0"/><rect x="0" y="48" width="1" height="1" fill="#8b93a0"/><rect x="0" y="50" width="1" height="1" fill="#8b93a0"/><rect x="0" y="52" width="1" height="1" fill="#8b93a0"/><rect x="0" y="54" width="1" height="1" fill="#8b93a0"/><rect x="0" y="56" width="1" height="1" fill="#8b93a0"/><rect x="0" y="58" width="1" height="1" fill="#8b93a0"/><rect x="0" y="60" width="1" height="1" fill="#8b93a0"/><rect x="0" y="62" width="1" height="1" fill="#8b93a0"/><rect x="0" y="64" width="1" height="1" fill="#8b93a0"/><rect x="0" y="66" width="1" height="1" fill="#8b93a0"/><rect x="0" y="68" width="1" height="1" fill="#8b93a0"/><rect x="0" y="70" width="1" height="1" fill="#8b93a0"/><rect x="0" y="72" width="1" height="1" fill="#8b93a0"/><rect x="0" y="74" width="1" height="1" fill="#8b93a0"/><rect x="0" y="76" width="1" height="1" fill="#8b93a0"/><rect x="0" y="78" width="1" height="1" fill="#8b93a0"/><rect x="0" y="80" width="1" height="1" fill="#8b93a0"/><rect x="0" y="82" width="1" height="1" fill="#8b93a0"/><rect x="0" y="84" width="1" height="1" fill="#8b93a0"/></svg>
<svg style="left:17px;top:263px;" width="8" height="1" viewBox="0 0 8 1"><rect x="0" y="0" width="1" height="1" fill="#8b93a0"/><rect x="2" y="0" width="1" height="1" fill="#8b93a0"/><rect x="4" y="0" width="1" height="1" fill="#8b93a0"/><rect x="6" y="0" width="1" height="1" fill="#8b93a0"/></svg>
<svg style="left:31px;top:281px;" width="12" height="1" viewBox="0 0 12 1"><rect x="0" y="0" width="1" height="1" fill="#8b93a0"/><rect x="2" y="0" width="1" height="1" fill="#8b93a0"/><rect x="4" y="0" width="1" height="1" fill="#8b93a0"/><rect x="6" y="0" width="1" height="1" fill="#8b93a0"/><rect x="8" y="0" width="1" height="1" fill="#8b93a0"/><rect x="10" y="0" width="1" height="1" fill="#8b93a0"/></svg>
<svg style="left:36px;top:299px;" width="7" height="1" viewBox="0 0 7 1"><rect x="0" y="0" width="1" height="1" fill="#8b93a0"/><rect x="2" y="0" width="1" height="1" fill="#8b93a0"/><rect x="4" y="0" width="1" height="1" fill="#8b93a0"/><rect x="6" y="0" width="1" height="1" fill="#8b93a0"/></svg>
<svg style="left:50px;top:317px;" width="12" height="1" viewBox="0 0 12 1"><rect x="0" y="0" width="1" height="1" fill="#8b93a0"/><rect x="2" y="0" width="1" height="1" fill="#8b93a0"/><rect x="4" y="0" width="1" height="1" fill="#8b93a0"/><rect x="6" y="0" width="1" height="1" fill="#8b93a0"/><rect x="8" y="0" width="1" height="1" fill="#8b93a0"/><rect x="10" y="0" width="1" height="1" fill="#8b93a0"/></svg>
<svg style="left:50px;top:335px;" width="12" height="1" viewBox="0 0 12 1"><rect x="0" y="0" width="1" height="1" fill="#8b93a0"/><rect x="2" y="0" width="1" height="1" fill="#8b93a0"/><rect x="4" y="0" width="1" height="1" fill="#8b93a0"/><rect x="6" y="0" width="1" height="1" fill="#8b93a0"/><rect x="8" y="0" width="1" height="1" fill="#8b93a0"/><rect x="10" y="0" width="1" height="1" fill="#8b93a0"/></svg>
<svg style="left:50px;top:353px;" width="12" height="1" viewBox="0 0 12 1"><rect x="0" y="0" width="1" height="1" fill="#8b93a0"/><rect x="2" y="0" width="1" height="1" fill="#8b93a0"/><rect x="4" y="0" width="1" height="1" fill="#8b93a0"/><rect x="6" y="0" width="1" height="1" fill="#8b93a0"/><rect x="8" y="0" width="1" height="1" fill="#8b93a0"/><rect x="10" y="0" width="1" height="1" fill="#8b93a0"/></svg>
<svg style="left:55px;top:371px;" width="7" height="1" viewBox="0 0 7 1"><rect x="0" y="0" width="1" height="1" fill="#8b93a0"/><rect x="2" y="0" width="1" height="1" fill="#8b93a0"/><rect x="4" y="0" width="1" height="1" fill="#8b93a0"/><rect x="6" y="0" width="1" height="1" fill="#8b93a0"/></svg>
<svg style="left:55px;top:389px;" width="7" height="1" viewBox="0 0 7 1"><rect x="0" y="0" width="1" height="1" fill="#8b93a0"/><rect x="2" y="0" width="1" height="1" fill="#8b93a0"/><rect x="4" y="0" width="1" height="1" fill="#8b93a0"/><rect x="6" y="0" width="1" height="1" fill="#8b93a0"/></svg>
<svg style="left:8px;top:259px;" width="9" height="9" viewBox="0 0 9 9"><rect x="0.5" y="0.5" width="8" height="8" fill="#3b4453" stroke="#aab0ba"/><path d="M2 4.5 H7" stroke="#e4e6ea" stroke-width="1"/></svg>
<svg style="left:27px;top:295px;" width="9" height="9" viewBox="0 0 9 9"><rect x="0.5" y="0.5" width="8" height="8" fill="#3b4453" stroke="#aab0ba"/><path d="M2 4.5 H7" stroke="#e4e6ea" stroke-width="1"/></svg>
<svg style="left:46px;top:367px;" width="9" height="9" viewBox="0 0 9 9"><rect x="0.5" y="0.5" width="8" height="8" fill="#3b4453" stroke="#aab0ba"/><path d="M2 4.5 H7 M4.5 2 V7" stroke="#e4e6ea" stroke-width="1"/></svg>
<svg style="left:46px;top:385px;" width="9" height="9" viewBox="0 0 9 9"><rect x="0.5" y="0.5" width="8" height="8" fill="#3b4453" stroke="#aab0ba"/><path d="M2 4.5 H7 M4.5 2 V7" stroke="#e4e6ea" stroke-width="1"/></svg>
<svg style="left:25px;top:256px;" width="13" height="13" viewBox="0 0 13 13"><path d="M4 0 H12 L9 3 H1 Z" fill="#e0e1e4"/><path d="M3.5 4 H11.5 L8.5 7 H0.5 Z" fill="#c8cacd"/><path d="M3 8 H11 L8 11 H0 Z" fill="#b4b7bc"/></svg>
<svg style="left:43.5px;top:274px;" width="14" height="13" viewBox="0 0 14 13"><path d="M0 1 H4 L5.5 2.5 H11 V9 H0 Z" fill="#d8dadd"/><path d="M5 6 H13 L10 9.2 V12.5 L8 11.2 V9.2 Z" fill="#d8dadd" stroke="#3b4453" stroke-width=".8"/></svg>
<svg style="left:43.5px;top:292px;" width="14" height="13" viewBox="0 0 14 13"><path d="M0 1 H4 L5.5 2.5 H11 V9 H0 Z" fill="#d8dadd"/><path d="M5 6 H13 L10 9.2 V12.5 L8 11.2 V9.2 Z" fill="#d8dadd" stroke="#3b4453" stroke-width=".8"/></svg>
<svg style="left:62.5px;top:310px;" width="14" height="13" viewBox="0 0 14 13"><path d="M0 1 H4 L5.5 2.5 H12 V11 H0 Z" fill="#d8dadd"/></svg>
<svg style="left:62.5px;top:328px;" width="14" height="13" viewBox="0 0 14 13"><path d="M0 1 H4 L5.5 2.5 H12 V11 H0 Z" fill="#d8dadd"/><path d="M5.5 8.5 L8 11 L12.5 5.5" stroke="#3fae6a" stroke-width="2" fill="none"/></svg>
<svg style="left:62.5px;top:346px;" width="14" height="13" viewBox="0 0 14 13"><path d="M0 1 H4 L5.5 2.5 H12 V11 H0 Z" fill="#d8dadd"/></svg>
<svg style="left:62.5px;top:364px;" width="14" height="13" viewBox="0 0 14 13"><path d="M0 1 H4 L5.5 2.5 H11 V9 H0 Z" fill="#d8dadd"/><path d="M5 6 H13 L10 9.2 V12.5 L8 11.2 V9.2 Z" fill="#d8dadd" stroke="#3b4453" stroke-width=".8"/></svg>
<svg style="left:62.5px;top:382px;" width="14" height="13" viewBox="0 0 14 13"><path d="M0 1 H4 L5.5 2.5 H11 V9 H0 Z" fill="#d8dadd"/><path d="M5 6 H13 L10 9.2 V12.5 L8 11.2 V9.2 Z" fill="#d8dadd" stroke="#3b4453" stroke-width=".8"/></svg>
<div style="left:80px;top:326px;width:64px;height:17px;background:#647dab;"></div>
<span id="t36" style="left:43px;top:255.0px;font:normal 400 12px/16px 'Liberation Sans',sans-serif;color:#e4e6ea;letter-spacing:0.219px;">All</span>
<span id="t37" style="left:62.5px;top:273.0px;font:normal 400 12px/16px 'Liberation Sans',sans-serif;color:#e4e6ea;letter-spacing:-0.370px;">All Used Layers</span>
<span id="t38" style="left:62.5px;top:291.0px;font:normal 400 12px/16px 'Liberation Sans',sans-serif;color:#e4e6ea;letter-spacing:-0.234px;">GeoDin Ground</span>
<span id="t39" style="left:81.5px;top:309.0px;font:normal 400 12px/16px 'Liberation Sans',sans-serif;color:#e4e6ea;letter-spacing:0.051px;">All annotations</span>
<span id="t40" style="left:81.5px;top:327.0px;font:normal 400 12px/16px 'Liberation Sans',sans-serif;color:#e4e6ea;letter-spacing:-0.044px;">All surfaces</span>
<span id="t41" style="left:81.5px;top:345.0px;font:normal 400 12px/16px 'Liberation Sans',sans-serif;color:#e4e6ea;letter-spacing:0.013px;">All volumes</span>
<span id="t42" style="left:81.5px;top:363.0px;font:normal 400 12px/16px 'Liberation Sans',sans-serif;color:#e4e6ea;letter-spacing:-0.228px;">Boreholes (basic)</span>
<span id="t43" style="left:81.5px;top:381.0px;font:normal 400 12px/16px 'Liberation Sans',sans-serif;color:#e4e6ea;letter-spacing:-0.142px;">Boreholes (detail)</span>
<div style="left:188px;top:221px;width:176px;height:22px;background:#3f4b63;"></div>
<div style="left:366px;top:221px;width:70px;height:22px;background:#3f4b63;"></div>
<div style="left:364px;top:221px;width:2px;height:722px;background:#2c3340;"></div>
<div style="left:205px;top:221px;width:1px;height:22px;background:#2f3747;"></div>
<div style="left:383px;top:221px;width:1px;height:22px;background:#2f3747;"></div>
<div style="left:401px;top:221px;width:1px;height:22px;background:#2f3747;"></div>
<div style="left:419px;top:221px;width:1px;height:22px;background:#2f3747;"></div>
<span id="t44" style="left:192px;top:222.8px;font:normal 400 13px/17px 'Liberation Sans',sans-serif;color:#e4e6ea;letter-spacing:-1.469px;">S..</span>
<span id="t45" style="left:210px;top:222.8px;font:normal 400 13px/17px 'Liberation Sans',sans-serif;color:#e4e6ea;letter-spacing:-0.672px;">Name</span>
<span id="t46" style="left:370px;top:222.8px;font:normal 400 13px/17px 'Liberation Sans',sans-serif;color:#e4e6ea;letter-spacing:-1.117px;">O.</span>
<span id="t47" style="left:388.5px;top:222.8px;font:normal 400 13px/17px 'Liberation Sans',sans-serif;color:#e4e6ea;letter-spacing:-0.911px;">F..</span>
<span id="t48" style="left:406.5px;top:222.8px;font:normal 400 13px/17px 'Liberation Sans',sans-serif;color:#e4e6ea;letter-spacing:-1.156px;">L..</span>
<span id="t49" style="left:424.5px;top:222.8px;font:normal 400 13px/17px 'Liberation Sans',sans-serif;color:#e4e6ea;letter-spacing:-0.555px;">P.</span>
<svg style="left:355px;top:229px;" width="8" height="5" viewBox="0 0 8 5"><path d="M0 5 H8 L4 0 Z" fill="#e4e6ea"/></svg>
<div style="left:188px;top:243px;width:176px;height:18px;background:#647dab;"></div>
<div style="left:366px;top:243px;width:70px;height:18px;background:#647dab;"></div>
<span id="t50" style="left:209px;top:243.5px;font:normal 400 12px/16px 'Liberation Sans',sans-serif;color:#e4e6ea;letter-spacing:-0.624px;">SRFC-GRP1-1 (CHALK)</span>
<svg style="left:190px;top:248.0px;" width="14" height="7" viewBox="0 0 14 7"><path d="M4.5 0.5 H13.5 L9.5 6.5 H0.5 Z" fill="#d8dadd"/></svg>
<svg style="left:369px;top:245.5px;" width="11" height="13" viewBox="0 0 11 13"><path d="M5.4 0.3 C8.4 0.3 10.3 2.3 10.3 4.6 C10.3 6.6 8.8 7.6 7.6 8.9 H3.2 C2 7.6 0.5 6.6 0.5 4.6 C0.5 2.3 2.4 0.3 5.4 0.3 Z" fill="#5ad6e0"/><path d="M3.6 9.8 H7.2 V11 L5.4 12.4 L3.6 11 Z" fill="#f2f3f5"/></svg>
<svg style="left:385.5px;top:244.5px;" width="14" height="14" viewBox="0 0 14 14"><circle cx="7" cy="7" r="3.5" fill="#fccb5e"/><g stroke="#f8e7b8" stroke-width="1.2"><path d="M7 0.4 V2.4" transform="rotate(0 7 7)"/><path d="M7 0.4 V2.4" transform="rotate(90 7 7)"/><path d="M7 0.4 V2.4" transform="rotate(180 7 7)"/><path d="M7 0.4 V2.4" transform="rotate(270 7 7)"/><path d="M7 1.2 V2.5" transform="rotate(45 7 7)"/><path d="M7 1.2 V2.5" transform="rotate(135 7 7)"/><path d="M7 1.2 V2.5" transform="rotate(225 7 7)"/><path d="M7 1.2 V2.5" transform="rotate(315 7 7)"/></g></svg>
<svg style="left:404px;top:244.5px;" width="13" height="14" viewBox="0 0 13 14"><rect x="1" y="5.8" width="9.1" height="6.8" fill="#f8c458"/><rect x="5" y="7.6" width="1.2" height="3" fill="#2a2418"/><path d="M7.7 5.8 V3.9 A1.9 2.1 0 0 1 11.4 3.9 V5" fill="none" stroke="#f6d68c" stroke-width="1.2"/></svg>
<svg style="left:422.5px;top:245.0px;" width="13" height="13" viewBox="0 0 13 13"><rect x="3.3" y="1" width="6.4" height="3" fill="#f4f5f7"/><path d="M0.5 3.4 H12.5 V10.6 H10.4 V8.6 H2.6 V10.6 H0.5 Z" fill="#eceef2"/><rect x="3.3" y="9.4" width="6.4" height="3.4" fill="#f4f5f7"/><rect x="4.3" y="10.2" width="4.4" height="1.2" fill="#7aa6e0"/></svg>
<span id="t51" style="left:209px;top:261.5px;font:normal 400 12px/16px 'Liberation Sans',sans-serif;color:#e4e6ea;letter-spacing:-0.658px;">SRFC-GRP1-2 (S(FI))</span>
<svg style="left:190px;top:266.0px;" width="14" height="7" viewBox="0 0 14 7"><path d="M4.5 0.5 H13.5 L9.5 6.5 H0.5 Z" fill="#d8dadd"/></svg>
<svg style="left:369px;top:263.5px;" width="11" height="13" viewBox="0 0 11 13"><path d="M5.4 0.3 C8.4 0.3 10.3 2.3 10.3 4.6 C10.3 6.6 8.8 7.6 7.6 8.9 H3.2 C2 7.6 0.5 6.6 0.5 4.6 C0.5 2.3 2.4 0.3 5.4 0.3 Z" fill="#5ad6e0"/><path d="M3.6 9.8 H7.2 V11 L5.4 12.4 L3.6 11 Z" fill="#f2f3f5"/></svg>
<svg style="left:385.5px;top:262.5px;" width="14" height="14" viewBox="0 0 14 14"><circle cx="7" cy="7" r="3.5" fill="#fccb5e"/><g stroke="#f8e7b8" stroke-width="1.2"><path d="M7 0.4 V2.4" transform="rotate(0 7 7)"/><path d="M7 0.4 V2.4" transform="rotate(90 7 7)"/><path d="M7 0.4 V2.4" transform="rotate(180 7 7)"/><path d="M7 0.4 V2.4" transform="rotate(270 7 7)"/><path d="M7 1.2 V2.5" transform="rotate(45 7 7)"/><path d="M7 1.2 V2.5" transform="rotate(135 7 7)"/><path d="M7 1.2 V2.5" transform="rotate(225 7 7)"/><path d="M7 1.2 V2.5" transform="rotate(315 7 7)"/></g></svg>
<svg style="left:404px;top:262.5px;" width="13" height="14" viewBox="0 0 13 14"><rect x="1" y="5.8" width="9.1" height="6.8" fill="#f8c458"/><rect x="5" y="7.6" width="1.2" height="3" fill="#2a2418"/><path d="M7.7 5.8 V3.9 A1.9 2.1 0 0 1 11.4 3.9 V5" fill="none" stroke="#f6d68c" stroke-width="1.2"/></svg>
<svg style="left:422.5px;top:263.0px;" width="13" height="13" viewBox="0 0 13 13"><rect x="3.3" y="1" width="6.4" height="3" fill="#f4f5f7"/><path d="M0.5 3.4 H12.5 V10.6 H10.4 V8.6 H2.6 V10.6 H0.5 Z" fill="#eceef2"/><rect x="3.3" y="9.4" width="6.4" height="3.4" fill="#f4f5f7"/><rect x="4.3" y="10.2" width="4.4" height="1.2" fill="#7aa6e0"/></svg>
<span id="t52" style="left:209px;top:279.5px;font:normal 400 12px/16px 'Liberation Sans',sans-serif;color:#e4e6ea;letter-spacing:-0.658px;">SRFC-GRP1-3 (S(FI))</span>
<svg style="left:190px;top:284.0px;" width="14" height="7" viewBox="0 0 14 7"><path d="M4.5 0.5 H13.5 L9.5 6.5 H0.5 Z" fill="#d8dadd"/></svg>
<svg style="left:369px;top:281.5px;" width="11" height="13" viewBox="0 0 11 13"><path d="M5.4 0.3 C8.4 0.3 10.3 2.3 10.3 4.6 C10.3 6.6 8.8 7.6 7.6 8.9 H3.2 C2 7.6 0.5 6.6 0.5 4.6 C0.5 2.3 2.4 0.3 5.4 0.3 Z" fill="#5ad6e0"/><path d="M3.6 9.8 H7.2 V11 L5.4 12.4 L3.6 11 Z" fill="#f2f3f5"/></svg>
<svg style="left:385.5px;top:280.5px;" width="14" height="14" viewBox="0 0 14 14"><circle cx="7" cy="7" r="3.5" fill="#fccb5e"/><g stroke="#f8e7b8" stroke-width="1.2"><path d="M7 0.4 V2.4" transform="rotate(0 7 7)"/><path d="M7 0.4 V2.4" transform="rotate(90 7 7)"/><path d="M7 0.4 V2.4" transform="rotate(180 7 7)"/><path d="M7 0.4 V2.4" transform="rotate(270 7 7)"/><path d="M7 1.2 V2.5" transform="rotate(45 7 7)"/><path d="M7 1.2 V2.5" transform="rotate(135 7 7)"/><path d="M7 1.2 V2.5" transform="rotate(225 7 7)"/><path d="M7 1.2 V2.5" transform="rotate(315 7 7)"/></g></svg>
<svg style="left:404px;top:280.5px;" width="13" height="14" viewBox="0 0 13 14"><rect x="1" y="5.8" width="9.1" height="6.8" fill="#f8c458"/><rect x="5" y="7.6" width="1.2" height="3" fill="#2a2418"/><path d="M7.7 5.8 V3.9 A1.9 2.1 0 0 1 11.4 3.9 V5" fill="none" stroke="#f6d68c" stroke-width="1.2"/></svg>
<svg style="left:422.5px;top:281.0px;" width="13" height="13" viewBox="0 0 13 13"><rect x="3.3" y="1" width="6.4" height="3" fill="#f4f5f7"/><path d="M0.5 3.4 H12.5 V10.6 H10.4 V8.6 H2.6 V10.6 H0.5 Z" fill="#eceef2"/><rect x="3.3" y="9.4" width="6.4" height="3.4" fill="#f4f5f7"/><rect x="4.3" y="10.2" width="4.4" height="1.2" fill="#7aa6e0"/></svg>
<span id="t53" style="left:209px;top:297.5px;font:normal 400 12px/16px 'Liberation Sans',sans-serif;color:#e4e6ea;letter-spacing:-0.701px;">SRFC-GRP1-4 (C)</span>
<svg style="left:190px;top:302.0px;" width="14" height="7" viewBox="0 0 14 7"><path d="M4.5 0.5 H13.5 L9.5 6.5 H0.5 Z" fill="#d8dadd"/></svg>
<svg style="left:369px;top:299.5px;" width="11" height="13" viewBox="0 0 11 13"><path d="M5.4 0.3 C8.4 0.3 10.3 2.3 10.3 4.6 C10.3 6.6 8.8 7.6 7.6 8.9 H3.2 C2 7.6 0.5 6.6 0.5 4.6 C0.5 2.3 2.4 0.3 5.4 0.3 Z" fill="#5ad6e0"/><path d="M3.6 9.8 H7.2 V11 L5.4 12.4 L3.6 11 Z" fill="#f2f3f5"/></svg>
<svg style="left:385.5px;top:298.5px;" width="14" height="14" viewBox="0 0 14 14"><circle cx="7" cy="7" r="3.5" fill="#fccb5e"/><g stroke="#f8e7b8" stroke-width="1.2"><path d="M7 0.4 V2.4" transform="rotate(0 7 7)"/><path d="M7 0.4 V2.4" transform="rotate(90 7 7)"/><path d="M7 0.4 V2.4" transform="rotate(180 7 7)"/><path d="M7 0.4 V2.4" transform="rotate(270 7 7)"/><path d="M7 1.2 V2.5" transform="rotate(45 7 7)"/><path d="M7 1.2 V2.5" transform="rotate(135 7 7)"/><path d="M7 1.2 V2.5" transform="rotate(225 7 7)"/><path d="M7 1.2 V2.5" transform="rotate(315 7 7)"/></g></svg>
<svg style="left:404px;top:298.5px;" width="13" height="14" viewBox="0 0 13 14"><rect x="1" y="5.8" width="9.1" height="6.8" fill="#f8c458"/><rect x="5" y="7.6" width="1.2" height="3" fill="#2a2418"/><path d="M7.7 5.8 V3.9 A1.9 2.1 0 0 1 11.4 3.9 V5" fill="none" stroke="#f6d68c" stroke-width="1.2"/></svg>
<svg style="left:422.5px;top:299.0px;" width="13" height="13" viewBox="0 0 13 13"><rect x="3.3" y="1" width="6.4" height="3" fill="#f4f5f7"/><path d="M0.5 3.4 H12.5 V10.6 H10.4 V8.6 H2.6 V10.6 H0.5 Z" fill="#eceef2"/><rect x="3.3" y="9.4" width="6.4" height="3.4" fill="#f4f5f7"/><rect x="4.3" y="10.2" width="4.4" height="1.2" fill="#7aa6e0"/></svg>
<span id="t54" style="left:209px;top:315.5px;font:normal 400 12px/16px 'Liberation Sans',sans-serif;color:#e4e6ea;letter-spacing:-0.701px;">SRFC-GRP1-5 (C)</span>
<svg style="left:190px;top:320.0px;" width="14" height="7" viewBox="0 0 14 7"><path d="M4.5 0.5 H13.5 L9.5 6.5 H0.5 Z" fill="#d8dadd"/></svg>
<svg style="left:369px;top:317.5px;" width="11" height="13" viewBox="0 0 11 13"><path d="M5.4 0.3 C8.4 0.3 10.3 2.3 10.3 4.6 C10.3 6.6 8.8 7.6 7.6 8.9 H3.2 C2 7.6 0.5 6.6 0.5 4.6 C0.5 2.3 2.4 0.3 5.4 0.3 Z" fill="#5ad6e0"/><path d="M3.6 9.8 H7.2 V11 L5.4 12.4 L3.6 11 Z" fill="#f2f3f5"/></svg>
<svg style="left:385.5px;top:316.5px;" width="14" height="14" viewBox="0 0 14 14"><circle cx="7" cy="7" r="3.5" fill="#fccb5e"/><g stroke="#f8e7b8" stroke-width="1.2"><path d="M7 0.4 V2.4" transform="rotate(0 7 7)"/><path d="M7 0.4 V2.4" transform="rotate(90 7 7)"/><path d="M7 0.4 V2.4" transform="rotate(180 7 7)"/><path d="M7 0.4 V2.4" transform="rotate(270 7 7)"/><path d="M7 1.2 V2.5" transform="rotate(45 7 7)"/><path d="M7 1.2 V2.5" transform="rotate(135 7 7)"/><path d="M7 1.2 V2.5" transform="rotate(225 7 7)"/><path d="M7 1.2 V2.5" transform="rotate(315 7 7)"/></g></svg>
<svg style="left:404px;top:316.5px;" width="13" height="14" viewBox="0 0 13 14"><rect x="1" y="5.8" width="9.1" height="6.8" fill="#f8c458"/><rect x="5" y="7.6" width="1.2" height="3" fill="#2a2418"/><path d="M7.7 5.8 V3.9 A1.9 2.1 0 0 1 11.4 3.9 V5" fill="none" stroke="#f6d68c" stroke-width="1.2"/></svg>
<svg style="left:422.5px;top:317.0px;" width="13" height="13" viewBox="0 0 13 13"><rect x="3.3" y="1" width="6.4" height="3" fill="#f4f5f7"/><path d="M0.5 3.4 H12.5 V10.6 H10.4 V8.6 H2.6 V10.6 H0.5 Z" fill="#eceef2"/><rect x="3.3" y="9.4" width="6.4" height="3.4" fill="#f4f5f7"/><rect x="4.3" y="10.2" width="4.4" height="1.2" fill="#7aa6e0"/></svg>
<span id="t55" style="left:209px;top:333.5px;font:normal 400 12px/16px 'Liberation Sans',sans-serif;color:#e4e6ea;letter-spacing:-0.623px;">SRFC-GRP1-6 (S(ME))</span>
<svg style="left:190px;top:338.0px;" width="14" height="7" viewBox="0 0 14 7"><path d="M4.5 0.5 H13.5 L9.5 6.5 H0.5 Z" fill="#d8dadd"/></svg>
<svg style="left:369px;top:335.5px;" width="11" height="13" viewBox="0 0 11 13"><path d="M5.4 0.3 C8.4 0.3 10.3 2.3 10.3 4.6 C10.3 6.6 8.8 7.6 7.6 8.9 H3.2 C2 7.6 0.5 6.6 0.5 4.6 C0.5 2.3 2.4 0.3 5.4 0.3 Z" fill="#5ad6e0"/><path d="M3.6 9.8 H7.2 V11 L5.4 12.4 L3.6 11 Z" fill="#f2f3f5"/></svg>
<svg style="left:385.5px;top:334.5px;" width="14" height="14" viewBox="0 0 14 14"><circle cx="7" cy="7" r="3.5" fill="#fccb5e"/><g stroke="#f8e7b8" stroke-width="1.2"><path d="M7 0.4 V2.4" transform="rotate(0 7 7)"/><path d="M7 0.4 V2.4" transform="rotate(90 7 7)"/><path d="M7 0.4 V2.4" transform="rotate(180 7 7)"/><path d="M7 0.4 V2.4" transform="rotate(270 7 7)"/><path d="M7 1.2 V2.5" transform="rotate(45 7 7)"/><path d="M7 1.2 V2.5" transform="rotate(135 7 7)"/><path d="M7 1.2 V2.5" transform="rotate(225 7 7)"/><path d="M7 1.2 V2.5" transform="rotate(315 7 7)"/></g></svg>
<svg style="left:404px;top:334.5px;" width="13" height="14" viewBox="0 0 13 14"><rect x="1" y="5.8" width="9.1" height="6.8" fill="#f8c458"/><rect x="5" y="7.6" width="1.2" height="3" fill="#2a2418"/><path d="M7.7 5.8 V3.9 A1.9 2.1 0 0 1 11.4 3.9 V5" fill="none" stroke="#f6d68c" stroke-width="1.2"/></svg>
<svg style="left:422.5px;top:335.0px;" width="13" height="13" viewBox="0 0 13 13"><rect x="3.3" y="1" width="6.4" height="3" fill="#f4f5f7"/><path d="M0.5 3.4 H12.5 V10.6 H10.4 V8.6 H2.6 V10.6 H0.5 Z" fill="#eceef2"/><rect x="3.3" y="9.4" width="6.4" height="3.4" fill="#f4f5f7"/><rect x="4.3" y="10.2" width="4.4" height="1.2" fill="#7aa6e0"/></svg>
<span id="t56" style="left:209px;top:351.5px;font:normal 400 12px/16px 'Liberation Sans',sans-serif;color:#e4e6ea;letter-spacing:-0.523px;">SRFC-GRP1-7 (M)</span>
<svg style="left:190px;top:356.0px;" width="14" height="7" viewBox="0 0 14 7"><path d="M4.5 0.5 H13.5 L9.5 6.5 H0.5 Z" fill="#d8dadd"/></svg>
<svg style="left:369px;top:353.5px;" width="11" height="13" viewBox="0 0 11 13"><path d="M5.4 0.3 C8.4 0.3 10.3 2.3 10.3 4.6 C10.3 6.6 8.8 7.6 7.6 8.9 H3.2 C2 7.6 0.5 6.6 0.5 4.6 C0.5 2.3 2.4 0.3 5.4 0.3 Z" fill="#5ad6e0"/><path d="M3.6 9.8 H7.2 V11 L5.4 12.4 L3.6 11 Z" fill="#f2f3f5"/></svg>
<svg style="left:385.5px;top:352.5px;" width="14" height="14" viewBox="0 0 14 14"><circle cx="7" cy="7" r="3.5" fill="#fccb5e"/><g stroke="#f8e7b8" stroke-width="1.2"><path d="M7 0.4 V2.4" transform="rotate(0 7 7)"/><path d="M7 0.4 V2.4" transform="rotate(90 7 7)"/><path d="M7 0.4 V2.4" transform="rotate(180 7 7)"/><path d="M7 0.4 V2.4" transform="rotate(270 7 7)"/><path d="M7 1.2 V2.5" transform="rotate(45 7 7)"/><path d="M7 1.2 V2.5" transform="rotate(135 7 7)"/><path d="M7 1.2 V2.5" transform="rotate(225 7 7)"/><path d="M7 1.2 V2.5" transform="rotate(315 7 7)"/></g></svg>
<svg style="left:404px;top:352.5px;" width="13" height="14" viewBox="0 0 13 14"><rect x="1" y="5.8" width="9.1" height="6.8" fill="#f8c458"/><rect x="5" y="7.6" width="1.2" height="3" fill="#2a2418"/><path d="M7.7 5.8 V3.9 A1.9 2.1 0 0 1 11.4 3.9 V5" fill="none" stroke="#f6d68c" stroke-width="1.2"/></svg>
<svg style="left:422.5px;top:353.0px;" width="13" height="13" viewBox="0 0 13 13"><rect x="3.3" y="1" width="6.4" height="3" fill="#f4f5f7"/><path d="M0.5 3.4 H12.5 V10.6 H10.4 V8.6 H2.6 V10.6 H0.5 Z" fill="#eceef2"/><rect x="3.3" y="9.4" width="6.4" height="3.4" fill="#f4f5f7"/><rect x="4.3" y="10.2" width="4.4" height="1.2" fill="#7aa6e0"/></svg>
<span id="t57" style="left:209px;top:369.5px;font:normal 400 12px/16px 'Liberation Sans',sans-serif;color:#e4e6ea;letter-spacing:-0.523px;">SRFC-GRP1-8 (M)</span>
<svg style="left:190px;top:374.0px;" width="14" height="7" viewBox="0 0 14 7"><path d="M4.5 0.5 H13.5 L9.5 6.5 H0.5 Z" fill="#d8dadd"/></svg>
<svg style="left:369px;top:371.5px;" width="11" height="13" viewBox="0 0 11 13"><path d="M5.4 0.3 C8.4 0.3 10.3 2.3 10.3 4.6 C10.3 6.6 8.8 7.6 7.6 8.9 H3.2 C2 7.6 0.5 6.6 0.5 4.6 C0.5 2.3 2.4 0.3 5.4 0.3 Z" fill="#5ad6e0"/><path d="M3.6 9.8 H7.2 V11 L5.4 12.4 L3.6 11 Z" fill="#f2f3f5"/></svg>
<svg style="left:385.5px;top:370.5px;" width="14" height="14" viewBox="0 0 14 14"><circle cx="7" cy="7" r="3.5" fill="#fccb5e"/><g stroke="#f8e7b8" stroke-width="1.2"><path d="M7 0.4 V2.4" transform="rotate(0 7 7)"/><path d="M7 0.4 V2.4" transform="rotate(90 7 7)"/><path d="M7 0.4 V2.4" transform="rotate(180 7 7)"/><path d="M7 0.4 V2.4" transform="rotate(270 7 7)"/><path d="M7 1.2 V2.5" transform="rotate(45 7 7)"/><path d="M7 1.2 V2.5" transform="rotate(135 7 7)"/><path d="M7 1.2 V2.5" transform="rotate(225 7 7)"/><path d="M7 1.2 V2.5" transform="rotate(315 7 7)"/></g></svg>
<svg style="left:404px;top:370.5px;" width="13" height="14" viewBox="0 0 13 14"><rect x="1" y="5.8" width="9.1" height="6.8" fill="#f8c458"/><rect x="5" y="7.6" width="1.2" height="3" fill="#2a2418"/><path d="M7.7 5.8 V3.9 A1.9 2.1 0 0 1 11.4 3.9 V5" fill="none" stroke="#f6d68c" stroke-width="1.2"/></svg>
<svg style="left:422.5px;top:371.0px;" width="13" height="13" viewBox="0 0 13 13"><rect x="3.3" y="1" width="6.4" height="3" fill="#f4f5f7"/><path d="M0.5 3.4 H12.5 V10.6 H10.4 V8.6 H2.6 V10.6 H0.5 Z" fill="#eceef2"/><rect x="3.3" y="9.4" width="6.4" height="3.4" fill="#f4f5f7"/><rect x="4.3" y="10.2" width="4.4" height="1.2" fill="#7aa6e0"/></svg>
<div style="left:192px;top:950px;width:29px;height:5px;background:#5a6476;border-radius:2.5px;"></div>
<span id="t58" style="left:4.5px;top:976.0px;font:normal 400 12px/16px 'Liberation Sans',sans-serif;color:#e4e6ea;letter-spacing:-0.189px;">All surfaces: 8 layers displayed of 281 total layers</span>
<svg style="left:16px;top:1010px;" width="17" height="12" viewBox="0 0 17 12"><path d="M0 1 H17 M0 6 H17 M0 11 H17" stroke="#e4e6ea" stroke-width="1.8"/></svg>
<svg style="left:40px;top:1003px;" width="72" height="26" viewBox="0 0 72 26"><path d="M0 26 L11 0 H70 L59 26 Z" fill="#3b4453"/></svg>
<span id="t59" style="left:58.5px;top:1007.0px;font:normal 700 13px/17px 'Liberation Sans',sans-serif;color:#f2f3f5;letter-spacing:-0.512px;">Model</span>
<span id="t60" style="left:117px;top:1007.0px;font:normal 400 13px/17px 'Liberation Sans',sans-serif;color:#e4e6ea;letter-spacing:-0.609px;">Layout1</span>
<svg style="left:166px;top:1008px;" width="10" height="15" viewBox="0 0 10 15"><path d="M8 0 L2 15" stroke="#4a5261" stroke-width="1.2"/></svg>
<span id="t61" style="left:183px;top:1007.0px;font:normal 400 13px/17px 'Liberation Sans',sans-serif;color:#e4e6ea;letter-spacing:-0.609px;">Layout2</span>
<svg style="left:232px;top:1008px;" width="10" height="15" viewBox="0 0 10 15"><path d="M8 0 L2 15" stroke="#4a5261" stroke-width="1.2"/></svg>
<svg style="left:251px;top:1008.5px;" width="14" height="14" viewBox="0 0 14 14"><path d="M7 0 V14 M0 7 H14" stroke="#e4e6ea" stroke-width="2"/></svg>
<svg style="left:274px;top:1008px;" width="10" height="15" viewBox="0 0 10 15"><path d="M8 0 L2 15" stroke="#4a5261" stroke-width="1.2"/></svg>
<span id="t62" style="left:444px;top:149.0px;font:normal 400 12px/16px 'Liberation Sans',sans-serif;color:#e8eaee;letter-spacing:-0.049px;">[&#8722;][Custom View][Shaded (Fast)]</span>
<svg style="left:1828.5px;top:158.8px;" width="11" height="4" viewBox="0 0 11 4"><rect width="10.6" height="3.2" fill="#f2f3f5"/></svg>
<svg style="left:1848px;top:152px;" width="11" height="11" viewBox="0 0 11 11"><rect x="0.8" y="3" width="7" height="7" fill="none" stroke="#f2f3f5" stroke-width="1.6"/><path d="M3 3 V0.8 H10.2 V8 H8" fill="none" stroke="#f2f3f5" stroke-width="1.6"/></svg>
<svg style="left:1869px;top:152px;" width="10" height="11" viewBox="0 0 10 11"><path d="M1 1 L9 10 M9 1 L1 10" stroke="#f2f3f5" stroke-width="2"/></svg>
<div style="left:723px;top:907.0px;width:60px;height:15px;background:#595b5e;border-radius:2px;"></div>
<span id="t63" style="left:725.5px;top:907.8px;font:normal 400 11.5px/15.5px 'DejaVu Sans Mono','Liberation Mono',monospace;color:#d8d8d8;letter-spacing:0.139px;">Command:</span>
<div style="left:723px;top:929.0px;width:60px;height:15px;background:#595b5e;border-radius:2px;"></div>
<span id="t64" style="left:725.5px;top:929.8px;font:normal 400 11.5px/15.5px 'DejaVu Sans Mono','Liberation Mono',monospace;color:#e2e2e2;letter-spacing:0.139px;">Command:</span>
<div style="left:723px;top:951.0px;width:60px;height:15px;background:#595b5e;border-radius:2px;"></div>
<span id="t65" style="left:725.5px;top:951.8px;font:normal 400 11.5px/15.5px 'DejaVu Sans Mono','Liberation Mono',monospace;color:#f4f4f4;letter-spacing:0.139px;">Command:</span>
<div style="left:661px;top:971px;width:58px;height:27px;background:#2a313e;"></div>
<div style="left:719px;top:971px;width:946px;height:27px;background:#c4c4c4;border-radius:0 2px 2px 0;"></div>
<svg style="left:665px;top:976px;" width="5" height="18" viewBox="0 0 5 18"><rect x="0" y="0" width="1.2" height="1.2" fill="#c8ccd2"/><rect x="0" y="2" width="1.2" height="1.2" fill="#c8ccd2"/><rect x="0" y="4" width="1.2" height="1.2" fill="#c8ccd2"/><rect x="0" y="6" width="1.2" height="1.2" fill="#c8ccd2"/><rect x="0" y="8" width="1.2" height="1.2" fill="#c8ccd2"/><rect x="0" y="10" width="1.2" height="1.2" fill="#c8ccd2"/><rect x="0" y="12" width="1.2" height="1.2" fill="#c8ccd2"/><rect x="0" y="14" width="1.2" height="1.2" fill="#c8ccd2"/><rect x="0" y="16" width="1.2" height="1.2" fill="#c8ccd2"/><rect x="2.4" y="0" width="1.2" height="1.2" fill="#c8ccd2"/><rect x="2.4" y="2" width="1.2" height="1.2" fill="#c8ccd2"/><rect x="2.4" y="4" width="1.2" height="1.2" fill="#c8ccd2"/><rect x="2.4" y="6" width="1.2" height="1.2" fill="#c8ccd2"/><rect x="2.4" y="8" width="1.2" height="1.2" fill="#c8ccd2"/><rect x="2.4" y="10" width="1.2" height="1.2" fill="#c8ccd2"/><rect x="2.4" y="12" width="1.2" height="1.2" fill="#c8ccd2"/><rect x="2.4" y="14" width="1.2" height="1.2" fill="#c8ccd2"/><rect x="2.4" y="16" width="1.2" height="1.2" fill="#c8ccd2"/></svg>
<svg style="left:677px;top:980px;" width="10" height="10" viewBox="0 0 10 10"><path d="M1 1 L9 9 M9 1 L1 9" stroke="#d6d8db" stroke-width="1.8"/></svg>
<svg style="left:698px;top:977px;" width="15" height="15" viewBox="0 0 15 15"><path d="M1.5 13.5 L8 7" stroke="#d6d8db" stroke-width="2.8" stroke-linecap="round"/><path d="M14.3 3.2 L11.8 5.7 L9.5 5.2 L9 3 L11.5 0.5 A4.3 4.3 0 1 0 14.3 3.2 Z" fill="#d6d8db"/></svg>
<svg style="left:723px;top:979px;" width="16" height="12" viewBox="0 0 16 12"><rect x="0.5" y="0.5" width="15" height="11" fill="#e4e4e4" stroke="#555" stroke-width="1"/><rect x="0.5" y="0.5" width="15" height="2" fill="#555"/><path d="M2.5 5 L5 7 L2.5 9 M6.5 9.3 H10" stroke="#333" stroke-width="1" fill="none"/></svg>
<svg style="left:741.5px;top:983.0px;" width="7" height="4" viewBox="0 0 7 4"><path d="M0 0 H7 L3.5 4 Z" fill="#555"/></svg>
<span id="t66" style="left:756px;top:978.2px;font:italic 400 11.5px/15.5px 'DejaVu Sans Mono','Liberation Mono',monospace;color:#6a6a6a;letter-spacing:0.004px;">Type a command</span>
<svg style="left:1653px;top:982px;" width="8" height="5" viewBox="0 0 8 5"><path d="M0 5 H8 L4 0 Z" fill="#4a4a4a"/></svg>
<svg style="left:480px;top:884px;" width="72" height="76" viewBox="0 0 72 76"><path d="M10.5 20 V64" stroke="#2f68d8" stroke-width="4"/><path d="M12.5 20 V63" stroke="#7ea6f0" stroke-width="1"/>
<path d="M12 62 L24 46" stroke="#1f8a2a" stroke-width="4.5" stroke-linecap="round"/>
<path d="M10 64 L56 69" stroke="#c82020" stroke-width="4" /><path d="M10 62.5 L56 67.5" stroke="#ff7a7a" stroke-width="1.2"/>
<path d="M8 5 H20 L8 16 H20" fill="none" stroke="#2f68d8" stroke-width="1.2"/>
<path d="M21 30 L26.5 36 L32 30 M26.5 36 V42" fill="none" stroke="#24a836" stroke-width="1.2"/>
<path d="M54 54 L66 66 M66 54 L54 66" stroke="#e03030" stroke-width="1.2"/></svg>
<svg style="left:1735px;top:205px;" width="145" height="120" viewBox="0 0 145 120"><defs><radialGradient id="vg" cx="50%" cy="50%" r="50%"><stop offset="0" stop-color="#343a42"/><stop offset="1" stop-color="#212830"/></radialGradient></defs>
<ellipse cx="72" cy="73" rx="50" ry="19" fill="url(#vg)"/>
<path fill-rule="evenodd" fill="#434951" d="M6.9 75.5 a64.7 30.2 0 1 0 129.4 0 a64.7 30.2 0 1 0 -129.4 0 Z M21.8 72.9 a50.7 18.8 0 1 0 101.4 0 a50.7 18.8 0 1 0 -101.4 0 Z"/>
<path d="M41 28 L55 12.5 L100.5 16.5 L91 34.5 Z" fill="#b7b9bd"/>
<path d="M91 34.5 L100.5 16.5 L99.5 59.5 L91 79.5 Z" fill="#94979b"/>
<path d="M41 28 L91 34.5 L91 79.5 L43 72 Z" fill="#a9abaf"/>
<path d="M51 31.5 L81 35.5 V42.5 L51 38.5 Z" fill="#bcbec4" opacity=".85"/>
<path d="M41 28 L91 34.5 L91 79.5" fill="none" stroke="#7e8186" stroke-width=".8" stroke-dasharray="4 2"/>
<path d="M91 34.5 L100.5 16.5" fill="none" stroke="#86898e" stroke-width=".8"/>
<text x="65.5" y="59.3" transform="skewY(7.5) translate(0 -8.6)" font-family="Liberation Sans,sans-serif" font-weight="700" font-size="13" fill="#54575d" text-anchor="middle" textLength="34" lengthAdjust="spacingAndGlyphs">FRONT</text>
<text transform="translate(72.5 24.5) skewX(-38) scale(1.25 .62)" font-family="Liberation Sans,sans-serif" font-weight="700" font-style="italic" font-size="10" fill="#5d6066" text-anchor="middle">TOP</text>
<text transform="translate(94.5 56) rotate(-66) scale(.8 .5)" font-family="Liberation Sans,sans-serif" font-weight="700" font-size="6.5" fill="#6d7076" text-anchor="middle">RIGHT</text>
<text transform="translate(17.5 65.5) rotate(-8) skewX(-32) scale(1.45 .62)" font-family="Liberation Sans,sans-serif" font-weight="700" font-size="15" fill="#c3c7cc" text-anchor="middle">W</text>
<text transform="translate(52.5 106) rotate(4) skewX(-12) scale(1.35 .92)" font-family="Liberation Sans,sans-serif" font-weight="700" font-size="15" fill="#c9cdd2" text-anchor="middle">S</text>
<text transform="translate(131.5 82.5) rotate(9) skewX(-14) scale(1.3 .85)" font-family="Liberation Sans,sans-serif" font-weight="700" font-size="15" fill="#c3c7cc" text-anchor="middle">E</text></svg>
<div style="left:1783px;top:337px;width:48px;height:17px;background:#8e929c;border-radius:3px;border:1px solid #a4a8b2;box-sizing:border-box;"></div>
<span id="t67" style="left:1787.5px;top:338.0px;font:normal 400 11px/15px 'Liberation Sans',sans-serif;color:#4e525a;letter-spacing:-0.557px;">WCS</span>
<svg style="left:1818px;top:342px;" width="9" height="7" viewBox="0 0 9 7"><path d="M0.5 0.5 H8.5 L4.5 6 Z" fill="none" stroke="#767a84" stroke-width="1"/></svg>
<svg style="left:1854px;top:379px;" width="33" height="213" viewBox="0 0 33 213"><rect x="0.5" y="0.5" width="32" height="212" rx="4" fill="#565b64" stroke="#40454d"/>
<circle cx="27" cy="6" r="3" fill="#50555d" stroke="#484d55"/><circle cx="27" cy="206" r="3" fill="#50555d" stroke="#484d55"/>
<circle cx="16" cy="30" r="11" fill="none" stroke="#464b54" stroke-width="1.6"/><circle cx="16" cy="30" r="6" fill="none" stroke="#464b54" stroke-width="1.4"/>
<path d="M8 78 V66 M12 76 V62 M16 76 V61 M20 76 V63 M24 78 V68 M8 78 Q9 88 16 88 Q24 88 24 78" fill="none" stroke="#464b54" stroke-width="2.2" stroke-linecap="round"/>
<path d="M5 90 L19 106 M19 90 L5 106" stroke="#464b54" stroke-width="1.6"/><circle cx="22" cy="106" r="4" fill="none" stroke="#464b54" stroke-width="1.5"/><path d="M25 109 L29 113" stroke="#464b54" stroke-width="2"/>
<path d="M16 126 V150 M12 130 L16 125 L20 130" fill="none" stroke="#464b54" stroke-width="2"/><ellipse cx="16" cy="142" rx="9" ry="4" fill="none" stroke="#464b54" stroke-width="1.4"/>
<rect x="5" y="169" width="6" height="5" fill="none" stroke="#464b54"/><rect x="13" y="169" width="6" height="5" fill="none" stroke="#464b54"/><rect x="21" y="169" width="6" height="5" fill="none" stroke="#464b54"/>
<rect x="5" y="178" width="16" height="12" fill="none" stroke="#464b54" stroke-width="1.3"/><path d="M10 180.5 L17 184 L10 187.5 Z" fill="#464b54"/>
<path d="M14 52 H18 L16 54.5 Z M14 117 H18 L16 119.5 Z M14 156 H18 L16 158.5 Z" fill="#464b54"/></svg>
<div style="left:1218.5px;top:1005px;width:47.0px;height:24px;background:#2c3441;"></div>
<div style="left:1268px;top:1005px;width:64.5px;height:24px;background:#2c3441;"></div>
<div style="left:1335px;top:1005px;width:168.5px;height:24px;background:#2c3441;"></div>
<div style="left:1506px;top:1005px;width:127.5px;height:24px;background:#2c3441;"></div>
<div style="left:1636px;top:1005px;width:40.5px;height:24px;background:#2c3441;"></div>
<div style="left:1678.5px;top:1005px;width:25.0px;height:24px;background:#2c3441;"></div>
<div style="left:1706px;top:1005px;width:67.5px;height:24px;background:#2c3441;"></div>
<div style="left:1776px;top:1005px;width:89.5px;height:24px;background:#2c3441;"></div>
<div style="left:1868px;top:1005px;width:25px;height:24px;background:#2c3441;"></div>
<div style="left:1895.5px;top:1005px;width:23.5px;height:24px;background:#2c3441;"></div>
<div style="left:1360px;top:1006px;width:22.5px;height:22px;background:#5585c8;"></div>
<div style="left:1441px;top:1006px;width:22.5px;height:22px;background:#5585c8;"></div>
<div style="left:1465px;top:1006px;width:22.5px;height:22px;background:#5585c8;"></div>
<div style="left:1508px;top:1006px;width:22.5px;height:22px;background:#5585c8;"></div>
<div style="left:1816px;top:1006px;width:24px;height:22px;background:#5585c8;"></div>
<span id="t68" style="left:1222px;top:1008.0px;font:normal 400 13px/17px 'Liberation Sans',sans-serif;color:#e4e6ea;letter-spacing:-1.247px;">MODEL</span>
<svg style="left:1271px;top:1008px;" width="17" height="17" viewBox="0 0 17 17"><path d="M4 1 V16 M8.5 1 V16 M13 1 V16 M1 4 H16 M1 8.5 H16 M1 13 H16" stroke="#e4e6ea" stroke-width="1.1"/></svg>
<svg style="left:1297px;top:1011px;" width="15" height="12" viewBox="0 0 15 12"><rect x="0.4" y="0.3" width="1.7" height="1.7" fill="#e4e6ea"/><rect x="0.4" y="5" width="1.7" height="1.7" fill="#e4e6ea"/><rect x="0.4" y="9.7" width="1.7" height="1.7" fill="#e4e6ea"/><rect x="4.2" y="0.3" width="1.7" height="1.7" fill="#e4e6ea"/><rect x="4.2" y="5" width="1.7" height="1.7" fill="#e4e6ea"/><rect x="4.2" y="9.7" width="1.7" height="1.7" fill="#e4e6ea"/><rect x="8" y="0.3" width="1.7" height="1.7" fill="#e4e6ea"/><rect x="8" y="5" width="1.7" height="1.7" fill="#e4e6ea"/><rect x="8" y="9.7" width="1.7" height="1.7" fill="#e4e6ea"/><rect x="11.8" y="0.3" width="1.7" height="1.7" fill="#e4e6ea"/><rect x="11.8" y="5" width="1.7" height="1.7" fill="#e4e6ea"/><rect x="11.8" y="9.7" width="1.7" height="1.7" fill="#e4e6ea"/></svg>
<svg style="left:1320.5px;top:1015.0px;" width="7" height="4" viewBox="0 0 7 4"><path d="M0 0 H7 L3.5 4 Z" fill="#c9ced6"/></svg>
<svg style="left:1339px;top:1008px;" width="17" height="17" viewBox="0 0 17 17"><path d="M1 1 V16 H16 M1 10.5 H6.5 V16" fill="none" stroke="#e4e6ea" stroke-width="1.2"/></svg>
<svg style="left:1362px;top:1008px;" width="18" height="18" viewBox="0 0 18 18"><circle cx="8" cy="10" r="6.5" fill="none" stroke="#f2f3f5" stroke-width="1.3"/><path d="M8 10 H17 M8 10 L15.5 1.5" stroke="#f2f3f5" stroke-width="1.3"/></svg>
<svg style="left:1387.5px;top:1015.0px;" width="7" height="4" viewBox="0 0 7 4"><path d="M0 0 H7 L3.5 4 Z" fill="#c9ced6"/></svg>
<svg style="left:1403px;top:1008px;" width="16" height="17" viewBox="0 0 16 17"><path d="M1 1 L14 16" stroke="#e85a6a" stroke-width="1.2"/><path d="M7.5 0 V17" stroke="#5fd07a" stroke-width="1.2"/><rect x="6" y="7" width="3" height="3" fill="#2c3441" stroke="#e4e6ea" stroke-width=".8"/></svg>
<svg style="left:1427.5px;top:1015.0px;" width="7" height="4" viewBox="0 0 7 4"><path d="M0 0 H7 L3.5 4 Z" fill="#c9ced6"/></svg>
<svg style="left:1444px;top:1008px;" width="18" height="18" viewBox="0 0 18 18"><path d="M1 15.5 H17 M1 15.5 L15 2" stroke="#f2f3f5" stroke-width="1.4"/><rect x="6.5" y="8" width="3" height="3" fill="#f2f3f5"/></svg>
<svg style="left:1468px;top:1008px;" width="18" height="18" viewBox="0 0 18 18"><rect x="3.5" y="3.5" width="13" height="13" fill="none" stroke="#f2f3f5" stroke-width="1.4"/><rect x="1" y="1" width="4.5" height="4.5" fill="#5585c8" stroke="#f2f3f5" stroke-width="1.1"/></svg>
<svg style="left:1492.5px;top:1015.0px;" width="7" height="4" viewBox="0 0 7 4"><path d="M0 0 H7 L3.5 4 Z" fill="#c9ced6"/></svg>
<svg style="left:1511px;top:1008px;" width="18" height="18" viewBox="0 0 18 18"><path d="M8 1 L10.5 8 L15 16 L8 12.5 L1 16 L5.5 8 Z" fill="#f2f3f5"/><circle cx="14.5" cy="4" r="2.3" fill="none" stroke="#f2f3f5" stroke-width="1.1"/></svg>
<svg style="left:1535px;top:1008px;" width="18" height="18" viewBox="0 0 18 18"><path d="M8 1 L10.5 8 L15 16 L8 12.5 L1 16 L5.5 8 Z" fill="#d0d3d8"/><path d="M14.5 0.5 L12 4.5 H14 L12.5 8 L16.5 3.5 H14.3 Z" fill="#d0d3d8"/></svg>
<svg style="left:1559px;top:1008px;" width="16" height="18" viewBox="0 0 16 18"><path d="M8 1 L10.5 8 L15 16 L8 12.5 L1 16 L5.5 8 Z" fill="#d0d3d8"/></svg>
<span id="t69" style="left:1584px;top:1008.0px;font:normal 400 13px/17px 'Liberation Sans',sans-serif;color:#e4e6ea;letter-spacing:-0.794px;">1:1000</span>
<svg style="left:1622.5px;top:1015.0px;" width="7" height="4" viewBox="0 0 7 4"><path d="M0 0 H7 L3.5 4 Z" fill="#c9ced6"/></svg>
<svg style="left:1641px;top:1009px;" width="16" height="16" viewBox="0 0 16 16"><g transform="translate(8 8)"><circle r="4.3" fill="none" stroke="#d8dadd" stroke-width="3"/><g fill="#d8dadd"><rect x="-1.6" y="-7.8" width="3.2" height="3.2" transform="rotate(0)"/><rect x="-1.6" y="-7.8" width="3.2" height="3.2" transform="rotate(45)"/><rect x="-1.6" y="-7.8" width="3.2" height="3.2" transform="rotate(90)"/><rect x="-1.6" y="-7.8" width="3.2" height="3.2" transform="rotate(135)"/><rect x="-1.6" y="-7.8" width="3.2" height="3.2" transform="rotate(180)"/><rect x="-1.6" y="-7.8" width="3.2" height="3.2" transform="rotate(225)"/><rect x="-1.6" y="-7.8" width="3.2" height="3.2" transform="rotate(270)"/><rect x="-1.6" y="-7.8" width="3.2" height="3.2" transform="rotate(315)"/></g></g></svg>
<svg style="left:1665.0px;top:1015.0px;" width="7" height="4" viewBox="0 0 7 4"><path d="M0 0 H7 L3.5 4 Z" fill="#c9ced6"/></svg>
<svg style="left:1682px;top:1008px;" width="17" height="17" viewBox="0 0 17 17"><path d="M8.5 0 V17 M0 8.5 H17" stroke="#e4e6ea" stroke-width="1.8"/></svg>
<svg style="left:1710px;top:1008px;" width="16" height="17" viewBox="0 0 16 17"><path d="M1 7 A7 4 0 0 1 15 7" fill="none" stroke="#e4e6ea" stroke-width="1" stroke-dasharray="1.6 1.4"/><path d="M8 5 L15.5 9 L8 13 L0.5 9 Z" fill="#58a8e8"/><path d="M0.5 10.5 L8 14.5 L15.5 10.5 V12.5 L8 16.5 L0.5 12.5 Z" fill="#e4e6ea"/></svg>
<span id="t70" style="left:1737px;top:1008.0px;font:normal 400 13px/17px 'Liberation Sans',sans-serif;color:#e4e6ea;letter-spacing:-0.509px;">3.500</span>
<svg style="left:1780px;top:1008px;" width="17" height="17" viewBox="0 0 17 17"><path d="M1 5 V1 H5 M12 1 H16 V5 M16 12 V16 H12 M5 16 H1 V12" fill="none" stroke="#e4e6ea" stroke-width="1.3"/><path d="M4 10 L9.5 4 H13 V7.5 L7.5 13.5 Z" fill="#58a8e8" stroke="#e4e6ea" stroke-width=".8"/></svg>
<svg style="left:1804.5px;top:1015.0px;" width="7" height="4" viewBox="0 0 7 4"><path d="M0 0 H7 L3.5 4 Z" fill="#c9ced6"/></svg>
<svg style="left:1820px;top:1008px;" width="16" height="17" viewBox="0 0 16 17"><path d="M1 10 L8.5 2 H15 V8.5 L7.5 16 Z" fill="#f2f3f5"/><circle cx="12" cy="5" r="1.3" fill="#5585c8"/><path d="M5.5 9.5 L8.5 12.5 M7.5 7.5 L10.5 10.5" stroke="#5585c8" stroke-width="1"/></svg>
<svg style="left:1845px;top:1008px;" width="17" height="17" viewBox="0 0 17 17"><rect x="0.6" y="0.6" width="6" height="6" fill="none" stroke="#e4e6ea" stroke-width="1.1"/><circle cx="13" cy="6.5" r="3" fill="none" stroke="#e4e6ea" stroke-width="1.1"/><path d="M3 16.4 H10 L6.5 10.5 Z" fill="none" stroke="#e4e6ea" stroke-width="1.1"/></svg>
<svg style="left:1871px;top:1010px;" width="17" height="13" viewBox="0 0 17 13"><rect x="0.6" y="0.6" width="15.8" height="11.8" fill="none" stroke="#e4e6ea" stroke-width="1.2"/><path d="M3 10 L13.5 3.5 M3 10 V7 M3 10 H6 M13.5 3.5 V6.5 M13.5 3.5 H10.5" stroke="#e4e6ea" stroke-width="1.1" fill="none"/></svg>
<svg style="left:1898px;top:1010.5px;" width="16" height="12" viewBox="0 0 16 12"><path d="M0 1 H16 M0 6 H16 M0 11 H16" stroke="#e4e6ea" stroke-width="1.8"/></svg>
<div style="left:1892px;top:144px;width:25px;height:555px;background:#363e4c;border:1px solid #2c3340;border-top:none;box-sizing:border-box;"></div>
<div style="left:1892px;top:701px;width:25px;height:74px;background:#363e4c;border:1px solid #2c3340;box-sizing:border-box;"></div>
<svg style="left:1896px;top:147px;" width="14" height="3" viewBox="0 0 14 3"><rect x="0" y="0" width="1" height="1" fill="#aab0ba"/><rect x="0" y="2" width="1" height="1" fill="#aab0ba"/><rect x="2" y="0" width="1" height="1" fill="#aab0ba"/><rect x="2" y="2" width="1" height="1" fill="#aab0ba"/><rect x="4" y="0" width="1" height="1" fill="#aab0ba"/><rect x="4" y="2" width="1" height="1" fill="#aab0ba"/><rect x="6" y="0" width="1" height="1" fill="#aab0ba"/><rect x="6" y="2" width="1" height="1" fill="#aab0ba"/><rect x="8" y="0" width="1" height="1" fill="#aab0ba"/><rect x="8" y="2" width="1" height="1" fill="#aab0ba"/><rect x="10" y="0" width="1" height="1" fill="#aab0ba"/><rect x="10" y="2" width="1" height="1" fill="#aab0ba"/><rect x="12" y="0" width="1" height="1" fill="#aab0ba"/><rect x="12" y="2" width="1" height="1" fill="#aab0ba"/></svg>
<svg style="left:1896px;top:705px;" width="14" height="3" viewBox="0 0 14 3"><rect x="0" y="0" width="1" height="1" fill="#aab0ba"/><rect x="0" y="2" width="1" height="1" fill="#aab0ba"/><rect x="2" y="0" width="1" height="1" fill="#aab0ba"/><rect x="2" y="2" width="1" height="1" fill="#aab0ba"/><rect x="4" y="0" width="1" height="1" fill="#aab0ba"/><rect x="4" y="2" width="1" height="1" fill="#aab0ba"/><rect x="6" y="0" width="1" height="1" fill="#aab0ba"/><rect x="6" y="2" width="1" height="1" fill="#aab0ba"/><rect x="8" y="0" width="1" height="1" fill="#aab0ba"/><rect x="8" y="2" width="1" height="1" fill="#aab0ba"/><rect x="10" y="0" width="1" height="1" fill="#aab0ba"/><rect x="10" y="2" width="1" height="1" fill="#aab0ba"/><rect x="12" y="0" width="1" height="1" fill="#aab0ba"/><rect x="12" y="2" width="1" height="1" fill="#aab0ba"/></svg>
<div style="left:1895px;top:441px;width:19px;height:1.6px;background:#e4e6ea;"></div>
<div style="left:1895px;top:469.5px;width:19px;height:1.6px;background:#e4e6ea;"></div>
<div style="left:1895px;top:541px;width:19px;height:1.6px;background:#e4e6ea;"></div>
<svg style="left:1895px;top:155px;" width="18" height="18" viewBox="0 0 18 18"><path d="M2.5 17 V2.5 H16" fill="none" stroke="#eef0f3" stroke-width="1.2"/><path d="M4.5 4.5 H14.5 Q13.5 12.5 4.5 14 Z" fill="#c6d2e2"/><path d="M12 4.6 Q11.4 10.2 4.6 12" fill="none" stroke="#5b86bc" stroke-width="1.3"/></svg>
<svg style="left:1895px;top:178px;" width="18" height="18" viewBox="0 0 18 18"><path d="M2.5 1 V16.5 H17" fill="none" stroke="#eef0f3" stroke-width="1.2" stroke-dasharray="2 1.4"/><path d="M2.5 16.5 L15.5 4" stroke="#eef0f3" stroke-width="1.3"/><path d="M4 13 V3.5 Q10 4.5 11.5 7.5 Z" fill="#c6d2e2"/><path d="M4.2 5.8 Q8 6.4 9.6 9" fill="none" stroke="#5b86bc" stroke-width="1.2"/></svg>
<svg style="left:1895px;top:199px;" width="18" height="18" viewBox="0 0 18 18"><path d="M5.5 1.5 V16" stroke="#eef0f3" stroke-width="1.2" stroke-dasharray="2 1.4"/><path d="M7.5 3.5 Q14 9 7.5 13 Z" fill="#c6d2e2"/><path d="M9.5 4.6 Q13.4 9 9 12.2" fill="none" stroke="#5b86bc" stroke-width="1.2"/><path d="M7.5 10 L13.5 15" stroke="#eef0f3" stroke-width="1.2"/></svg>
<svg style="left:1895px;top:221px;" width="18" height="18" viewBox="0 0 18 18"><path d="M4.5 1.5 V17" stroke="#eef0f3" stroke-width="1.2" stroke-dasharray="2 1.4"/><path d="M6.5 3 L15 6 L6.5 13 Z" fill="#c6d2e2"/><path d="M4.5 14.5 L16 5" stroke="#eef0f3" stroke-width="1.2"/><path d="M8.4 4 Q11 6.5 9.6 10" fill="none" stroke="#5b86bc" stroke-width="1.1"/></svg>
<svg style="left:1895px;top:243px;" width="18" height="18" viewBox="0 0 18 18"><path d="M1 1 H8 L12 5 V9 H8 V17 H1 Z" fill="#e4e6ea"/><path d="M4.5 1 V17 M1 8 H10" stroke="#343c4a" stroke-width="1.2"/><rect x="9.5" y="10" width="7.5" height="7.5" fill="#343c4a" stroke="#e4e6ea" stroke-width="1"/><path d="M13.2 10 V17.5 M9.5 13.7 H17" stroke="#e4e6ea" stroke-width=".9"/></svg>
<svg style="left:1895px;top:265px;" width="18" height="18" viewBox="0 0 18 18"><circle cx="7.5" cy="7.5" r="7" fill="#58a8e8"/><path d="M3 4 Q6 2 8 5 Q6 8 9 10 Q7 13 4 11 Z" fill="#dff0ff"/><rect x="9.5" y="10" width="7.5" height="7.5" fill="#343c4a" stroke="#e4e6ea" stroke-width="1"/><path d="M13.2 10 V17.5 M9.5 13.7 H17" stroke="#e4e6ea" stroke-width=".9"/></svg>
<svg style="left:1895px;top:287px;" width="18" height="18" viewBox="0 0 18 18"><circle cx="9" cy="9" r="8" fill="#58a8e8"/><path d="M1 9 H17 M9 1 V17 M3 4 Q9 8 15 4 M3 14 Q9 10 15 14" fill="none" stroke="#e8f4ff" stroke-width="1"/><rect x="5" y="9" width="3.5" height="3.5" fill="#343c4a"/><rect x="10.5" y="6" width="3.5" height="3.5" fill="#343c4a"/></svg>
<svg style="left:1895px;top:309px;" width="18" height="18" viewBox="0 0 18 18"><path d="M6.5 6.5m-4.6 0h9.2m-4.6 -4.6v9.2" stroke="#e4e6ea" stroke-width="1"/><circle cx="6.5" cy="6.5" r="2.4" fill="#363e4c" stroke="#e4e6ea" stroke-width="1"/><rect x="5.0" y="5.0" width="0" height="0"/><path d="M11.5 11 V17 M14.5 11 V17 M9.8 12.8 H16.2 M9.8 15.2 H16.2" stroke="#58a8e8" stroke-width="1.1"/></svg>
<svg style="left:1895px;top:332px;" width="18" height="18" viewBox="0 0 18 18"><path d="M6.5 6.5m-4.6 0h9.2m-4.6 -4.6v9.2" stroke="#e4e6ea" stroke-width="1"/><circle cx="6.5" cy="6.5" r="2.4" fill="#363e4c" stroke="#e4e6ea" stroke-width="1"/><rect x="5.0" y="5.0" width="0" height="0"/><path d="M10.5 17 L13.3 10 L16.1 17 M11.5 14.6 H15.1" fill="none" stroke="#e4e6ea" stroke-width="1.1"/></svg>
<svg style="left:1895px;top:354px;" width="18" height="18" viewBox="0 0 18 18"><path d="M6.5 6.5m-4.6 0h9.2m-4.6 -4.6v9.2" stroke="#e4e6ea" stroke-width="1"/><circle cx="6.5" cy="6.5" r="2.4" fill="#363e4c" stroke="#e4e6ea" stroke-width="1"/><rect x="5.0" y="5.0" width="0" height="0"/><path d="M9.5 7.5 V17 L11.8 14.8 L13.6 18 L15.2 17.2 L13.4 14 H16.8 Z" fill="#f2f3f5" stroke="#363e4c" stroke-width=".5"/></svg>
<svg style="left:1895px;top:375px;" width="18" height="18" viewBox="0 0 18 18"><path d="M6.5 6.5m-4.6 0h9.2m-4.6 -4.6v9.2" stroke="#e4e6ea" stroke-width="1"/><circle cx="6.5" cy="6.5" r="2.4" fill="#363e4c" stroke="#e4e6ea" stroke-width="1"/><rect x="5.0" y="5.0" width="0" height="0"/><circle cx="12.2" cy="12.2" r="2.8" fill="#363e4c" stroke="#e4e6ea" stroke-width="1.2"/><path d="M14.2 14.2 L17 17" stroke="#e4e6ea" stroke-width="1.6"/></svg>
<svg style="left:1895px;top:396px;" width="18" height="18" viewBox="0 0 18 18"><path d="M3.5 1.5 V17" stroke="#eef0f3" stroke-width="1.1" stroke-dasharray="2 1.4"/><rect x="6.5" y="3.5" width="9.5" height="9.5" fill="none" stroke="#e4e6ea" stroke-width="1.1"/><path d="M7 12.5 L14 5.5 M14 5.5 V9 M14 5.5 H10.5" stroke="#e4e6ea" stroke-width="1.1" fill="none"/><path d="M9 13 H13 L16 10 V13 Z" fill="#5b9ad8"/></svg>
<svg style="left:1895px;top:417px;" width="18" height="18" viewBox="0 0 18 18"><path d="M7 1 V17" stroke="#58a8e8" stroke-width="1.6"/><path d="M1 5 H13" stroke="#e4e6ea" stroke-width="1" stroke-dasharray="2 1.5"/><path d="M10 3 Q17 9 10 15" fill="none" stroke="#e4e6ea" stroke-width="1" stroke-dasharray="2 1.5"/><circle cx="7" cy="5" r="1.6" fill="#e4e6ea"/></svg>
<svg style="left:1895px;top:448px;" width="18" height="18" viewBox="0 0 18 18"><path d="M6.5 4.5m-3.4 0h6.8m-3.4 -3.4v6.8" stroke="#e4e6ea" stroke-width="1"/><rect x="5.1" y="3.1" width="2.8" height="2.8" fill="#363e4c" stroke="#e4e6ea" stroke-width=".9" transform="rotate(45 6.5 4.5)"/><path d="M1 9 H9 L6 12.5 V17 L4 15.5 V12.5 Z" fill="#c9ccd1"/><path d="M9 4 V15 L11.7 12.3 L13.8 16.5 L15.4 15.6 L13.3 11.7 H17 Z" fill="#f2f3f5"/></svg>
<svg style="left:1895px;top:476px;" width="18" height="18" viewBox="0 0 18 18"><path d="M2 7 H12 M7 2 V12" stroke="#58a8e8" stroke-width="1" stroke-dasharray="2 1.2"/><circle cx="7" cy="7" r="1.6" fill="#58a8e8"/><path d="M8 14 Q16 14 15 8 M15 8 L13 10.5 M15 8 L17 10.5" fill="none" stroke="#e4e6ea" stroke-width="1" stroke-dasharray="2 1.2"/></svg>
<svg style="left:1895px;top:498px;" width="18" height="18" viewBox="0 0 18 18"><path d="M1.5 6.5 L6.5 2 L11.5 6.5 V10.5 H1.5 Z" fill="#d4d7dc"/><path d="M1.5 6.5 L6.5 9 L11.5 6.5 M6.5 9 V10.5" fill="none" stroke="#8a8f98" stroke-width=".8"/><path d="M8 15.5 Q16 15.5 15 10.5 M15 10.5 L13 13 M15 10.5 L17 13" fill="none" stroke="#58a8e8" stroke-width="1" stroke-dasharray="2 1.2"/></svg>
<svg style="left:1895px;top:518px;" width="18" height="18" viewBox="0 0 18 18"><path d="M6.5 6.5m-4.6 0h9.2m-4.6 -4.6v9.2" stroke="#e4e6ea" stroke-width="1"/><circle cx="6.5" cy="6.5" r="2.4" fill="#363e4c" stroke="#e4e6ea" stroke-width="1"/><rect x="5.0" y="5.0" width="0" height="0"/><path d="M8 15 Q16 15 15 10 M15 10 L13 12.5 M15 10 L17 12.5" fill="none" stroke="#58a8e8" stroke-width="1" stroke-dasharray="2 1.2"/></svg>
<svg style="left:1895px;top:546px;" width="18" height="18" viewBox="0 0 18 18"><path d="M3.5 1.5 V15.5 H17" fill="none" stroke="#e4e6ea" stroke-width="1.1" stroke-dasharray="2 1.5"/><path d="M3.5 7.5 H10 V15.5" fill="none" stroke="#e4e6ea" stroke-width="1" stroke-dasharray="1.5 1.5"/><rect x="8.8" y="6.3" width="2.6" height="2.6" fill="#f2f3f5"/></svg>
<svg style="left:1895px;top:568px;" width="18" height="18" viewBox="0 0 18 18"><path d="M3 16 H16 V5" fill="none" stroke="#e4e6ea" stroke-width="1.1" stroke-dasharray="2 1.5"/><path d="M3 16 L12 6 M3 6 L7 2 M7 2 V5 M7 2 H4" stroke="#e4e6ea" stroke-width="1.1" fill="none"/><path d="M12 9 V13" stroke="#58a8e8" stroke-width="1.2"/></svg>
<svg style="left:1895px;top:591px;" width="18" height="18" viewBox="0 0 18 18"><path d="M2 2 V15 H16" fill="none" stroke="#e4e6ea" stroke-width="1.1" stroke-dasharray="2 1.5"/><path d="M3 14 L12 6 M4 9 H10" stroke="#58a8e8" stroke-width="1.2"/><path d="M9 13 L15 13 L12 9 Z" fill="#e4e6ea"/></svg>
<svg style="left:1895px;top:613px;" width="18" height="18" viewBox="0 0 18 18"><path d="M2 16 L13 5" stroke="#58a8e8" stroke-width="1.2"/><path d="M3 5 L8 1 M8 1 V4 M8 1 H5" stroke="#e4e6ea" stroke-width="1" fill="none"/><path d="M8 15 H17 M15 13 L17 15 L15 17 M10 13 L8 15 L10 17" fill="none" stroke="#e4e6ea" stroke-width="1"/></svg>
<svg style="left:1895px;top:635px;" width="18" height="18" viewBox="0 0 18 18"><circle cx="8.5" cy="8.5" r="7.5" fill="none" stroke="#f2f3f5" stroke-width="1.6"/><path d="M8.5 8.5 L3.5 3.5 M3.5 3.5 V7 M3.5 3.5 H7" stroke="#e4e6ea" stroke-width="1.1" fill="none"/><path d="M10 11 L15 8 L18 13 L13 16 Z" fill="#f0c050" stroke="#343c4a" stroke-width=".6"/></svg>
<svg style="left:1895px;top:658px;" width="18" height="18" viewBox="0 0 18 18"><path d="M2 12 L13 3" stroke="#f2f3f5" stroke-width="1.6"/><path d="M12 0.5 L15.5 5 M0.5 10 L4 14.5" stroke="#e4e6ea" stroke-width="1.1"/><path d="M9 12 L14 9 L17 14 L12 17 Z" fill="#f0c050" stroke="#343c4a" stroke-width=".6"/><path d="M3 16 H9" stroke="#58a8e8" stroke-width="1.2"/></svg>
<svg style="left:1895px;top:680px;" width="18" height="18" viewBox="0 0 18 18"><path d="M2 17 Q3 5 14 2" fill="none" stroke="#e4e6ea" stroke-width="1.3" stroke-dasharray="3 1.6"/><rect x="10" y="8" width="7" height="9" fill="#58a8e8"/><path d="M11.2 11.5 H15.8 M11.2 13.5 H15.8 M11.2 15.5 H15.8 M12.7 10 V17 M14.3 10 V17" stroke="#f2f3f5" stroke-width=".8"/><rect x="11" y="9" width="5" height="1.6" fill="#f2f3f5"/></svg>
<svg style="left:1895px;top:712px;" width="18" height="18" viewBox="0 0 18 18"><path d="M6.5 4.5m-3.4 0h6.8m-3.4 -3.4v6.8" stroke="#e4e6ea" stroke-width="1"/><rect x="5.1" y="3.1" width="2.8" height="2.8" fill="#363e4c" stroke="#e4e6ea" stroke-width=".9" transform="rotate(45 6.5 4.5)"/><path d="M1 9 H9 L6 12.5 V17 L4 15.5 V12.5 Z" fill="#c9ccd1"/><path d="M9 4 V15 L11.7 12.3 L13.8 16.5 L15.4 15.6 L13.3 11.7 H17 Z" fill="#f2f3f5"/></svg>
<svg style="left:1895px;top:733px;" width="18" height="18" viewBox="0 0 18 18"><path d="M1 1 H8 L12 5 V8 H1 Z" fill="#c9ccd1"/><path d="M4.5 1 V8" stroke="#343c4a" stroke-width="1.1"/><path d="M1 9 H8 L5.5 12.5 V17 L3.5 15.5 V12.5 Z" fill="#c9ccd1"/><rect x="9.5" y="10" width="7.5" height="7.5" fill="#343c4a" stroke="#e4e6ea" stroke-width="1"/><path d="M13.2 10 V17.5 M9.5 13.7 H17" stroke="#e4e6ea" stroke-width=".9"/></svg>
<svg style="left:1895px;top:754px;" width="18" height="18" viewBox="0 0 18 18"><path d="M6.5 4.5m-3.4 0h6.8m-3.4 -3.4v6.8" stroke="#e4e6ea" stroke-width="1"/><rect x="5.1" y="3.1" width="2.8" height="2.8" fill="#363e4c" stroke="#e4e6ea" stroke-width=".9" transform="rotate(45 6.5 4.5)"/><path d="M1 9 H9 L6 12.5 V17 L4 15.5 V12.5 Z" fill="#c9ccd1"/><path d="M12 12 V17 M15 12 V17 M10.5 13.5 H16.5 M10.5 15.5 H16.5" stroke="#58a8e8" stroke-width="1"/></svg>
<svg style="left:440px;top:146px" width="1447" height="852" viewBox="440 146 1447 852" shape-rendering="crispEdges"><polygon points="672,639 668,639.5 665.5,643 665.5,671 667,673.5 671,675 683.4,750 683.4,781 686,785.5 692,788.5 701,789.5 715,789 1113,755 1425,695.5 1437,695.5 1778.6,434 1778.6,395 1769,385.5 1760,380 1430,600 1107,680 700,700" fill="#19b1b2" /><polygon points="672,639 668,639.5 665.5,643 665.5,671 667,673.5 671,675 683.4,750 711,753 711,740 705,715 690,646 685,639" fill="#10a9b2" /><polygon points="665.5,643 668,639.5 671.5,639.5 671.5,675 667,673.5 665.5,671" fill="#25bcc6" /><polygon points="671.5,650 677,650 691,720 700,745 690,751 683.4,750 671.5,677" fill="#0cb0c0" /><polygon points="683.4,750 691.4,751.3 691.4,786 686,785.5 683.4,781" fill="#109fa6" /><polygon points="691.4,751.3 711.7,753 711.7,789.3 701,789.5 692,788.5 691.4,788" fill="#13a8ac" /><polygon points="711.7,753 723.5,752 723.5,788.3 711.7,789.3" fill="#1cb3b3" /><polygon points="1113,724 1425,668 1425,695.5 1113,755" fill="#47d4d8" /><polygon points="1108,724.5 1113.5,724 1113.5,755 1108,755.4" fill="#5ad0d2" /><polygon points="1420,669 1428,667.5 1428,695.5 1425,695.5 1420,696.5" fill="#22b4bc" /><polygon points="1428,667.5 1437,666.4 1437,695.5 1428,695.5" fill="#52d2d8" /><polygon points="1437,666.4 1778.6,395 1778.6,434 1437,695.5" fill="#019496" /><polygon points="700,735 711,735 1107,705 1113.5,724 723.5,752 711.7,753 691.4,751.3 683.4,750" fill="#07b1c1" /><polygon points="1107,700 1419,640 1430,638 1437,666.4 1425,668 1113.5,724" fill="#08aebe" /><polygon points="1430,630 1762,372 1766,383 1769,385.5 1778.6,395 1437,666.4" fill="#12b5bd" /><polygon points="711,708.7 1107,676 1107,718 711,744.5" fill="#c6ba69" /><polygon points="1107,676 1419,618.7 1419,663 1107,718" fill="#e2dc90" /><polygon points="1419,618.7 1425,617.75 1425,660.8 1419,663" fill="#d0c676" /><polygon points="1425,617.75 1430,616.8 1430,658.6 1425,660.8" fill="#e0d98c" /><polygon points="1430,616.8 1766,358 1762.0,392.5 1430,658.6" fill="#a39a49" /><polygon points="711,708.7 1107,676 1107,710 711,743.5" fill="#c5752a" /><polygon points="1107,676 1419,618.7 1419,654 1107,710" fill="#e09555" /><polygon points="1419,618.7 1425,617.75 1425,651.25 1419,654" fill="#cc7c30" /><polygon points="1425,617.75 1430,616.8 1430,648.5 1425,651.25" fill="#dc9050" /><polygon points="1430,616.8 1766,358 1762.8,389.5 1430,648.5" fill="#a86010" /><polygon points="711,708.7 1107,676 1107,707 711,739.7" fill="#73c083" /><polygon points="1107,676 1419,618.7 1419,650.5 1107,707" fill="#8bdca6" /><polygon points="1419,618.7 1425,617.75 1425,648.25 1419,650.5" fill="#7cc88e" /><polygon points="1425,617.75 1430,616.8 1430,646 1425,648.25" fill="#8ad8a2" /><polygon points="1430,616.8 1766,358 1763.6,387.5 1430,646" fill="#509c62" /><polygon points="711,708.7 1107,676 1107,696.6 711,729.6" fill="#c6ba69" /><polygon points="1107,676 1419,618.7 1419,640.5 1107,696.6" fill="#e2dc90" /><polygon points="1419,618.7 1425,617.75 1425,637.9 1419,640.5" fill="#d0c676" /><polygon points="1425,617.75 1430,616.8 1430,635.3 1425,637.9" fill="#e0d98c" /><polygon points="1430,616.8 1766,358 1764.4,377 1430,635.3" fill="#a39a49" /><polygon points="711,708.7 1107,676 1107,690 711,722" fill="#b4651f" /><polygon points="1107,676 1419,618.7 1419,634 1107,690" fill="#da8e4d" /><polygon points="1419,618.7 1425,617.75 1425,631.7 1419,634" fill="#c47634" /><polygon points="1425,617.75 1430,616.8 1430,629.4 1425,631.7" fill="#dc9252" /><polygon points="1430,616.8 1766,358 1765.2,371 1430,629.4" fill="#a14d00" /><polygon points="696.7,716 711,708.7 711,722 696.7,718.9" fill="#a85404" /><polygon points="698.5,719.3 711,722 711,729.6 701.5,727.8" fill="#b5aa5c" /><polygon points="701.5,727.8 711,729.6 711,739.7 702.7,738" fill="#65b078" /><polygon points="702.7,738 711,739.7 711,743.5 705.5,742.5" fill="#b86c24" /><polygon points="705.5,742.5 711,743.5 711,744.5 708,744.2" fill="#b5aa5c" /><polygon points="1102,676.4 1107,676 1107,718 1102,718.4" fill="#ffffff" opacity='.07'/><polygon points="674,613 678,613 680,628.6 674,628.6" fill="#62b47c" /><polygon points="672,628.6 680,628.6 682,648 688,667.5 691,680 697,704 699,722 696.7,719 693.8,704 688,680 684.4,667.5 677.5,648 672,646" fill="#b9ae5e" /><polygon points="679.5,648 682,648 688,667.5 691,680 697,704 696,704 689.5,680 686,667.5" fill="#5aa870" /><polygon points="671,597 672.5,593 676,590.3 1226,405 1294,318.5 1522,280.8 1532,281 1763,351 1766,357 1766,358 1430,616.8 1419,618.7 1107,676 711,708.7 696.7,718 695.8,704 690,680 686.6,667.5 680.5,648 678.3,628.6 676,612.3 671,610.5" fill="#ab5800" /><polygon points="676,590.5 1226,405 1133,511 1015,577" fill="#aa5700" /><polygon points="1015,577 1133,511 1410,520 1102,671" fill="#ac5901" /><polygon points="1133,511 1473,421 1410,520" fill="#aa5600" /><polygon points="1410,520 1419,614 1430,616 1424,560" fill="#ae5a03" /><polygon points="676,612 700,610 711,708 697,716 695.8,704" fill="#a95500" /><rect x="684.0" y="596.0" width="1.2" height="1.2" fill="#e09a3c"/><rect x="1241.5" y="405.5" width="1.2" height="1.2" fill="#e09a3c"/><rect x="1301.5" y="320.5" width="1.2" height="1.2" fill="#e09a3c"/><rect x="1527.5" y="286.5" width="1.2" height="1.2" fill="#e09a3c"/><rect x="1756.5" y="355.5" width="1.2" height="1.2" fill="#e09a3c"/><rect x="1472.5" y="420.5" width="1.2" height="1.2" fill="#e09a3c"/><rect x="1132.5" y="510.5" width="1.2" height="1.2" fill="#e09a3c"/><rect x="1014.5" y="576.5" width="1.2" height="1.2" fill="#e09a3c"/><rect x="1409.5" y="519.5" width="1.2" height="1.2" fill="#e09a3c"/><rect x="1101.5" y="670.5" width="1.2" height="1.2" fill="#e09a3c"/><rect x="1418.5" y="613.5" width="1.2" height="1.2" fill="#e09a3c"/><rect x="710.5" y="703.5" width="1.2" height="1.2" fill="#e09a3c"/></svg>
</body></html>
